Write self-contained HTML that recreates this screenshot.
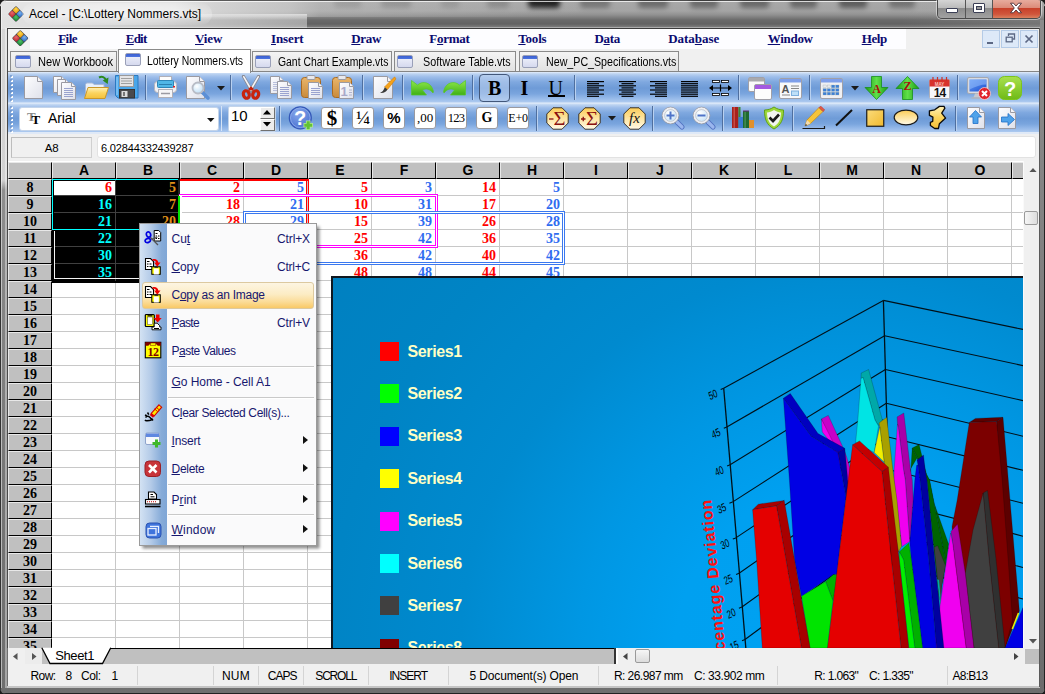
<!DOCTYPE html><html><head><meta charset="utf-8"><title>Accel</title><style>
*{box-sizing:border-box;margin:0;padding:0}
html,body{width:1045px;height:694px;overflow:hidden;background:#1c1c1c}
body{position:relative;font-family:"Liberation Sans",sans-serif;font-size:12px;color:#000}
.abs{position:absolute}
#frame{position:absolute;left:0;top:0;width:1045px;height:694px;border-radius:7px 7px 6px 6px;overflow:hidden;
 background:linear-gradient(#d6d6d6 0,#d2d2d2 180px,#8e8e8e 190px,#858585 300px,#757575 500px,#6e6e6e 694px);}
#titlebar{position:absolute;left:0;top:0;width:1045px;height:29px;overflow:hidden;
 background:linear-gradient(#a8a8a8 0,#a4a4a4 11px,#909090 15px,#6a6a6a 20px,#626262 24px,#7c7c7c 27px,#8a8a8a 29px);}
#title{position:absolute;left:29px;top:7px;font-size:12px;color:#000;white-space:nowrap;letter-spacing:-0.02px}
#client{position:absolute;left:8px;top:29px;width:1031px;height:657px;background:#f0f0f0;overflow:hidden}
.menu{position:absolute;top:0;height:20px;line-height:20px;font-family:"Liberation Serif",serif;font-weight:bold;font-size:13px;color:#0b0b70;white-space:nowrap}
.menu u{text-decoration:underline}
.tab{position:absolute;height:20px;top:22px;border:1px solid #8a8a8a;border-bottom:none;background:linear-gradient(#f4f4f4,#e2e2e2);font-size:11px;white-space:nowrap;line-height:19px}
.tab.act{top:20px;height:23.500px;background:#fff;line-height:20px;z-index:2}
.tab i{position:absolute;left:4px;top:3px;width:16px;height:13px;border:1px solid #9aa0b8;border-radius:2px;background:linear-gradient(#3a5fd0 0,#4d74e0 3px,#e9ecf8 3px,#d5d9ee 100%)}
.tab span{position:absolute;left:28px;top:1px}
.tb{position:absolute;left:0;width:1031px}
.hdr{position:absolute;background:#c0c0c0;border-right:1px solid #000;border-bottom:1px solid #000;border-top:1px solid #e8e8e8;border-left:1px solid #e8e8e8;text-align:center;font-weight:bold}
.ch{top:133px;height:17px;font-size:14px;line-height:15px;font-family:"Liberation Sans",sans-serif}
.rh{left:0;width:44px;height:17px;font-family:"Liberation Serif",serif;font-size:14px;line-height:15px}
.cell{position:absolute;height:17px;line-height:17px;font-family:"Liberation Serif",serif;font-weight:bold;font-size:14px;text-align:right;white-space:nowrap}
.sb{position:absolute;top:637px;height:20px;line-height:20px;font-size:12.5px;white-space:nowrap;color:#000}
.sep{position:absolute;top:640px;width:1px;height:16px;background:#d0d0d0}
</style></head><body>
<div id="frame">
<div id="titlebar"></div>
<svg width="0" height="0" style="position:absolute"><defs>
<radialGradient id="lgo" cx=".35" cy=".35" r=".8"><stop offset="0" stop-color="#ffd848"/><stop offset="1" stop-color="#e89a10"/></radialGradient>
<radialGradient id="lgb" cx=".35" cy=".35" r=".8"><stop offset="0" stop-color="#7ab0ee"/><stop offset="1" stop-color="#2f6cc0"/></radialGradient>
<radialGradient id="lgr" cx=".35" cy=".35" r=".8"><stop offset="0" stop-color="#e8686c"/><stop offset="1" stop-color="#bc2830"/></radialGradient>
<radialGradient id="lgg" cx=".35" cy=".35" r=".8"><stop offset="0" stop-color="#50c068"/><stop offset="1" stop-color="#168530"/></radialGradient>
</defs></svg>
<div class="abs" style="left:334px;top:-5px;width:27px;height:13px;border-radius:4px;background:rgba(20,20,20,0.18);filter:blur(2.500px)"></div>
<div class="abs" style="left:381px;top:-5px;width:30px;height:13px;border-radius:4px;background:rgba(20,20,20,0.22);filter:blur(2.500px)"></div>
<div class="abs" style="left:441px;top:-5px;width:18px;height:13px;border-radius:4px;background:rgba(20,20,20,0.15);filter:blur(2.500px)"></div>
<div class="abs" style="left:487px;top:-5px;width:22px;height:13px;border-radius:4px;background:rgba(20,20,20,0.22);filter:blur(2.500px)"></div>
<div class="abs" style="left:528px;top:-5px;width:32px;height:13px;border-radius:4px;background:rgba(20,20,20,0.95);filter:blur(2.500px)"></div>
<div class="abs" style="left:580px;top:-5px;width:30px;height:13px;border-radius:4px;background:rgba(20,20,20,0.32);filter:blur(2.500px)"></div>
<div class="abs" style="left:638px;top:-5px;width:30px;height:13px;border-radius:4px;background:rgba(20,20,20,0.4);filter:blur(2.500px)"></div>
<div class="abs" style="left:690px;top:-5px;width:28px;height:13px;border-radius:4px;background:rgba(20,20,20,0.4);filter:blur(2.500px)"></div>
<div class="abs" style="left:740px;top:-5px;width:29px;height:13px;border-radius:4px;background:rgba(20,20,20,0.42);filter:blur(2.500px)"></div>
<div class="abs" style="left:790px;top:-5px;width:27px;height:13px;border-radius:4px;background:rgba(20,20,20,0.42);filter:blur(2.500px)"></div>
<div class="abs" style="left:839px;top:-5px;width:28px;height:13px;border-radius:4px;background:rgba(20,20,20,0.5);filter:blur(2.500px)"></div>
<div class="abs" style="left:889px;top:-5px;width:26px;height:13px;border-radius:4px;background:rgba(20,20,20,0.35);filter:blur(2.500px)"></div>
<div class="abs" style="left:0;top:0;width:580px;height:17px;background:linear-gradient(90deg,rgba(228,228,228,1) 0,rgba(228,228,228,1) 175px,rgba(222,222,222,.8) 215px,rgba(215,215,215,.6) 290px,rgba(210,210,210,.3) 320px,rgba(205,205,205,.16) 450px,rgba(200,200,200,0) 580px)"></div>
<div class="abs" style="left:0;top:17px;width:307px;height:12px;background:linear-gradient(90deg,rgba(226,226,226,1) 0,rgba(224,224,224,.95) 60px,rgba(215,215,215,.8) 200px,rgba(205,205,205,.62) 306px)"></div>
<div class="abs" style="left:0;top:14px;width:307px;height:6px;background:linear-gradient(rgba(226,226,226,.9),rgba(226,226,226,0))"></div>
<div class="abs" style="left:900px;top:0;width:145px;height:29px;background:linear-gradient(90deg,rgba(160,160,160,0),rgba(160,160,160,.3))"></div>
<div class="abs" style="left:6px;top:1px;width:1033px;height:1px;background:rgba(255,255,255,.75)"></div>
<div class="abs" style="left:0;top:0;width:1045px;height:1px;background:rgba(40,40,40,.7)"></div>
<svg class="abs" style="left:8px;top:6px" width="16" height="16" viewBox="0 0 16 16">
<g transform="rotate(45 8 8)">
<rect x="2.300" y="2.300" width="11.400" height="11.400" rx="1.200" fill="#4a4a4a"/>
<rect x="2.700" y="2.700" width="5" height="5" rx=".9" fill="url(#lgo)"/>
<rect x="8.300" y="2.700" width="5" height="5" rx=".9" fill="url(#lgb)"/>
<rect x="2.700" y="8.300" width="5" height="5" rx=".9" fill="url(#lgr)"/>
<rect x="8.300" y="8.300" width="5" height="5" rx=".9" fill="url(#lgg)"/>
</g></svg>
<div class="abs" style="left:22px;top:3px;width:190px;height:22px;border-radius:11px;background:radial-gradient(ellipse at center,rgba(255,255,255,.55) 0,rgba(255,255,255,.35) 55%,rgba(255,255,255,0) 100%)"></div>
<div id="title">Accel - [C:\Lottery Nommers.vts]</div>
<div class="abs" style="left:937px;top:-1px;width:104px;height:20px;border:1px solid #4a4a4a;border-top:none;border-radius:0 0 5px 5px;overflow:hidden;box-shadow:0 0 0 1px rgba(255,255,255,.45)">
<div class="abs" style="left:0;top:0;width:28px;height:19px;background:linear-gradient(#d8d8d8 0,#bcbcbc 45%,#8c8c8c 50%,#a2a2a2 100%);border-right:1px solid #555"></div>
<div class="abs" style="left:28px;top:0;width:27px;height:19px;background:linear-gradient(#d8d8d8 0,#bcbcbc 45%,#8c8c8c 50%,#a2a2a2 100%);border-right:1px solid #555"></div>
<div class="abs" style="left:55px;top:0;width:48px;height:19px;background:linear-gradient(#e9b0a2 0,#dc8c7a 45%,#c8412a 50%,#d0563c 80%,#d9805e 100%)"></div>
<div class="abs" style="left:8px;top:9px;width:12px;height:5px;background:#fff;border:1px solid #3b3f55;border-radius:1px"></div>
<div class="abs" style="left:35px;top:4px;width:12px;height:10px;background:#fff;border:1px solid #3b3f55;border-radius:1px"></div>
<div class="abs" style="left:38px;top:7px;width:6px;height:4px;background:#9a9a9a;border:1px solid #3b3f55"></div>
<svg class="abs" style="left:71px;top:3px" width="14" height="12" viewBox="0 0 14 12"><path d="M1.5 1.2h3L7 4l2.5-2.8h3L8.7 6l3.8 4.8h-3L7 8 4.5 10.800h-3L5.300 6z" fill="#fff" stroke="#4a3038" stroke-width=".9" stroke-linejoin="round"/></svg>
</div>
<div class="abs" style="left:0;top:6px;width:1px;height:688px;background:#333"></div>
<div class="abs" style="left:1px;top:6px;width:1px;height:682px;background:rgba(255,255,255,.5)"></div>
<div class="abs" style="left:5px;top:28px;width:2px;height:660px;background:rgba(255,255,255,.38)"></div>
<div class="abs" style="left:7px;top:28px;width:1px;height:620px;background:#4a4a4a"></div>
<div class="abs" style="left:7px;top:28px;width:1033px;height:1px;background:#3c3c3c"></div>
<div class="abs" style="left:7px;top:27px;width:1033px;height:1px;background:rgba(255,255,255,.35)"></div>
<div class="abs" style="left:7px;top:686px;width:1034px;height:1.500px;background:#c4c4c4"></div>
<div class="abs" style="left:1039px;top:28px;width:1px;height:659px;background:#5a5a5a"></div>
<div class="abs" style="left:1040px;top:20px;width:4px;height:672px;background:linear-gradient(#8c8c8c,#6c6c6c)"></div>
<div class="abs" style="left:1044px;top:6px;width:1px;height:688px;background:#222"></div>
<div class="abs" style="left:0;top:692.500px;width:1045px;height:1.500px;background:#222"></div>
<div id="client">
<div class="abs" style="left:22px;top:0;width:876px;height:20px;background:#fdfdff"></div>
<div class="abs" style="left:0;top:0;width:22px;height:20px;background:#f3f3f3"></div>
<svg class="abs" style="left:4px;top:0.5px" width="16.5" height="16.5" viewBox="0 0 16 16">
<g transform="rotate(45 8 8)">
<rect x="2.300" y="2.300" width="11.400" height="11.400" rx="1.200" fill="#4a4a4a"/>
<rect x="2.700" y="2.700" width="5" height="5" rx=".9" fill="url(#lgo)"/>
<rect x="8.300" y="2.700" width="5" height="5" rx=".9" fill="url(#lgb)"/>
<rect x="2.700" y="8.300" width="5" height="5" rx=".9" fill="url(#lgr)"/>
<rect x="8.300" y="8.300" width="5" height="5" rx=".9" fill="url(#lgg)"/>
</g></svg>
<div class="menu" style="left:50.2px;letter-spacing:-0.538px"><u>F</u>ile</div>
<div class="menu" style="left:117.8px;letter-spacing:-0.811px"><u>E</u>dit</div>
<div class="menu" style="left:187.0px;letter-spacing:-0.097px"><u>V</u>iew</div>
<div class="menu" style="left:263.0px;letter-spacing:-0.122px"><u>I</u>nsert</div>
<div class="menu" style="left:343.3px;letter-spacing:-0.341px"><u>D</u>raw</div>
<div class="menu" style="left:421.3px;letter-spacing:-0.282px">F<u>o</u>rmat</div>
<div class="menu" style="left:510.3px;letter-spacing:-0.211px"><u>T</u>ools</div>
<div class="menu" style="left:586.4px;letter-spacing:-0.284px">D<u>a</u>ta</div>
<div class="menu" style="left:660.2px;letter-spacing:-0.025px">Data<u>b</u>ase</div>
<div class="menu" style="left:759.7px;letter-spacing:-0.289px"><u>W</u>indow</div>
<div class="menu" style="left:853.7px;letter-spacing:-0.363px"><u>H</u>elp</div>
<div class="abs" style="left:974px;top:1px;width:18px;height:18px;background:#dde9f8;border:1px solid #b5cbe6"></div>
<div class="abs" style="left:993px;top:1px;width:18px;height:18px;background:#dde9f8;border:1px solid #b5cbe6"></div>
<div class="abs" style="left:1012px;top:1px;width:18px;height:18px;background:#dde9f8;border:1px solid #b5cbe6"></div>
<div class="abs" style="left:979px;top:13px;width:6px;height:2px;background:#5c6884"></div>
<svg class="abs" style="left:997px;top:4px" width="11" height="11" viewBox="0 0 11 11"><path d="M3.500 3V1h6v5h-2" fill="none" stroke="#5c6884" stroke-width="1.3"/><rect x="1.2" y="4.200" width="6" height="4.600" fill="none" stroke="#5c6884" stroke-width="1.300"/></svg>
<svg class="abs" style="left:1016px;top:5px" width="10" height="10" viewBox="0 0 10 10"><path d="M1.500 1.500l7 7M8.500 1.500l-7 7" stroke="#5c6884" stroke-width="1.700"/></svg>
<div class="abs" style="left:0;top:41.500px;width:1031px;height:1.500px;background:#858585"></div>
<div class="tab" style="left:2px;width:107px"><i style="left:4px"></i><span style="left:27.0px;font-size:12px;display:inline-block;transform:scaleX(0.9243);transform-origin:0 0">New Workbook</span></div>
<div class="tab act" style="left:110px;width:133px"><i style="left:6px"></i><span style="left:28.0px;font-size:12px;display:inline-block;transform:scaleX(0.8672);transform-origin:0 0">Lottery Nommers.vts</span></div>
<div class="tab" style="left:244px;width:140px"><i style="left:2px"></i><span style="left:24.6px;font-size:12px;display:inline-block;transform:scaleX(0.8666);transform-origin:0 0">Gant Chart Example.vts</span></div>
<div class="tab" style="left:386px;width:122px"><i style="left:2px"></i><span style="left:28.0px;font-size:12px;display:inline-block;transform:scaleX(0.8965);transform-origin:0 0">Software Table.vts</span></div>
<div class="tab" style="left:511px;width:160px"><i style="left:2px"></i><span style="left:25.6px;font-size:12px;display:inline-block;transform:scaleX(0.8887);transform-origin:0 0">New_PC_Specifications.vts</span></div>
<div class="tb" style="top:43px;height:31px;background:linear-gradient(#e4eefb 0,#bcd3f1 6%,#9dbdea 16%,#7fa8df 32%,#6e9bd7 52%,#7aa5de 70%,#98bbea 86%,#b3cef1 100%)"></div>
<div class="tb" style="top:74px;height:30px;background:linear-gradient(#e4eefb 0,#bcd3f1 6%,#9dbdea 16%,#7fa8df 32%,#6e9bd7 52%,#7aa5de 70%,#98bbea 86%,#b3cef1 100%)"></div>
<div class="tb" style="top:73px;height:1px;background:#c9dcf5"></div>
<div class="tb" style="top:103px;height:2px;background:#dfe9f7"></div>
<svg class="abs" style="left:2px;top:46px" width="4" height="28" viewBox="0 0 4 28"><rect x="1" y="1" width="2" height="2" fill="#fff"/><rect x="0" y="0" width="2" height="2" fill="#5f86c0" opacity=".55"/><rect x="1" y="5" width="2" height="2" fill="#fff"/><rect x="0" y="4" width="2" height="2" fill="#5f86c0" opacity=".55"/><rect x="1" y="9" width="2" height="2" fill="#fff"/><rect x="0" y="8" width="2" height="2" fill="#5f86c0" opacity=".55"/><rect x="1" y="13" width="2" height="2" fill="#fff"/><rect x="0" y="12" width="2" height="2" fill="#5f86c0" opacity=".55"/><rect x="1" y="17" width="2" height="2" fill="#fff"/><rect x="0" y="16" width="2" height="2" fill="#5f86c0" opacity=".55"/><rect x="1" y="21" width="2" height="2" fill="#fff"/><rect x="0" y="20" width="2" height="2" fill="#5f86c0" opacity=".55"/><rect x="1" y="25" width="2" height="2" fill="#fff"/><rect x="0" y="24" width="2" height="2" fill="#5f86c0" opacity=".55"/></svg>
<svg class="abs" style="left:2px;top:77px" width="4" height="28" viewBox="0 0 4 28"><rect x="1" y="1" width="2" height="2" fill="#fff"/><rect x="0" y="0" width="2" height="2" fill="#5f86c0" opacity=".55"/><rect x="1" y="5" width="2" height="2" fill="#fff"/><rect x="0" y="4" width="2" height="2" fill="#5f86c0" opacity=".55"/><rect x="1" y="9" width="2" height="2" fill="#fff"/><rect x="0" y="8" width="2" height="2" fill="#5f86c0" opacity=".55"/><rect x="1" y="13" width="2" height="2" fill="#fff"/><rect x="0" y="12" width="2" height="2" fill="#5f86c0" opacity=".55"/><rect x="1" y="17" width="2" height="2" fill="#fff"/><rect x="0" y="16" width="2" height="2" fill="#5f86c0" opacity=".55"/><rect x="1" y="21" width="2" height="2" fill="#fff"/><rect x="0" y="20" width="2" height="2" fill="#5f86c0" opacity=".55"/><rect x="1" y="25" width="2" height="2" fill="#fff"/><rect x="0" y="24" width="2" height="2" fill="#5f86c0" opacity=".55"/></svg>
<div class="abs" style="left:137px;top:46px;width:1px;height:25px;background:#4f6f9f"></div><div class="abs" style="left:138px;top:46px;width:1px;height:25px;background:#b9d1f0"></div>
<div class="abs" style="left:222px;top:46px;width:1px;height:25px;background:#4f6f9f"></div><div class="abs" style="left:223px;top:46px;width:1px;height:25px;background:#b9d1f0"></div>
<div class="abs" style="left:354px;top:46px;width:1px;height:25px;background:#4f6f9f"></div><div class="abs" style="left:355px;top:46px;width:1px;height:25px;background:#b9d1f0"></div>
<div class="abs" style="left:394px;top:46px;width:1px;height:25px;background:#4f6f9f"></div><div class="abs" style="left:395px;top:46px;width:1px;height:25px;background:#b9d1f0"></div>
<div class="abs" style="left:464px;top:46px;width:1px;height:25px;background:#4f6f9f"></div><div class="abs" style="left:465px;top:46px;width:1px;height:25px;background:#b9d1f0"></div>
<div class="abs" style="left:566px;top:46px;width:1px;height:25px;background:#4f6f9f"></div><div class="abs" style="left:567px;top:46px;width:1px;height:25px;background:#b9d1f0"></div>
<div class="abs" style="left:730px;top:46px;width:1px;height:25px;background:#4f6f9f"></div><div class="abs" style="left:731px;top:46px;width:1px;height:25px;background:#b9d1f0"></div>
<div class="abs" style="left:801px;top:46px;width:1px;height:25px;background:#4f6f9f"></div><div class="abs" style="left:802px;top:46px;width:1px;height:25px;background:#b9d1f0"></div>
<div class="abs" style="left:949px;top:46px;width:1px;height:25px;background:#4f6f9f"></div><div class="abs" style="left:950px;top:46px;width:1px;height:25px;background:#b9d1f0"></div>
<div class="abs" style="left:271px;top:77px;width:1px;height:25px;background:#4f6f9f"></div><div class="abs" style="left:272px;top:77px;width:1px;height:25px;background:#b9d1f0"></div>
<div class="abs" style="left:528px;top:77px;width:1px;height:25px;background:#4f6f9f"></div><div class="abs" style="left:529px;top:77px;width:1px;height:25px;background:#b9d1f0"></div>
<div class="abs" style="left:644px;top:77px;width:1px;height:25px;background:#4f6f9f"></div><div class="abs" style="left:645px;top:77px;width:1px;height:25px;background:#b9d1f0"></div>
<div class="abs" style="left:714px;top:77px;width:1px;height:25px;background:#4f6f9f"></div><div class="abs" style="left:715px;top:77px;width:1px;height:25px;background:#b9d1f0"></div>
<div class="abs" style="left:784px;top:77px;width:1px;height:25px;background:#4f6f9f"></div><div class="abs" style="left:785px;top:77px;width:1px;height:25px;background:#b9d1f0"></div>
<div class="abs" style="left:947px;top:77px;width:1px;height:25px;background:#4f6f9f"></div><div class="abs" style="left:948px;top:77px;width:1px;height:25px;background:#b9d1f0"></div>
<svg width="0" height="0" style="position:absolute"><defs><linearGradient id="pg" x1="0" y1="0" x2="1" y2="1"><stop offset="0" stop-color="#fdfdff"/><stop offset="1" stop-color="#dfe1ea"/></linearGradient><linearGradient id="fold" x1="0" y1="0" x2="0" y2="1"><stop offset="0" stop-color="#fff1b8"/><stop offset=".5" stop-color="#fbd45e"/><stop offset="1" stop-color="#f4c13a"/></linearGradient><linearGradient id="clip" x1="0" y1="0" x2="0" y2="1"><stop offset="0" stop-color="#e9b56a"/><stop offset="1" stop-color="#c98a3a"/></linearGradient><linearGradient id="grn" x1="0" y1="0" x2="0" y2="1"><stop offset="0" stop-color="#8fe84a"/><stop offset="1" stop-color="#3fb016"/></linearGradient><linearGradient id="grn2" x1="0" y1="0" x2="1" y2="0"><stop offset="0" stop-color="#1e9a12"/><stop offset=".5" stop-color="#5fe04a"/><stop offset="1" stop-color="#1e9a12"/></linearGradient><linearGradient id="oct" x1="0" y1="0" x2="0" y2="1"><stop offset="0" stop-color="#fbcc58"/><stop offset=".45" stop-color="#fde29a"/><stop offset="1" stop-color="#fffae8"/></linearGradient><radialGradient id="hb" cx=".4" cy=".3" r=".9"><stop offset="0" stop-color="#86a8ea"/><stop offset="1" stop-color="#3c64cc"/></radialGradient><radialGradient id="lens" cx=".4" cy=".35" r=".7"><stop offset="0" stop-color="#ffffff"/><stop offset="1" stop-color="#b9dcf6"/></radialGradient><linearGradient id="mon" x1="0" y1="0" x2="1" y2="1"><stop offset="0" stop-color="#6aa0f5"/><stop offset="1" stop-color="#1b4fd0"/></linearGradient><linearGradient id="hg" x1="0" y1="0" x2="0" y2="1"><stop offset="0" stop-color="#a8e04e"/><stop offset="1" stop-color="#6fba16"/></linearGradient><linearGradient id="sq" x1="0" y1="0" x2="1" y2="1"><stop offset="0" stop-color="#fbdc7c"/><stop offset="1" stop-color="#f0b92e"/></linearGradient></defs></svg>
<svg class="abs" style="left:15px;top:46px" width="22" height="26" viewBox="0 0 22 26"><path d="M1.5 1.5h13l5 5v17h-18z" fill="url(#pg)" stroke="#9a9aa2" stroke-width="1"/><path d="M14.5 1.5v5h5" fill="#f4f4f8" stroke="#9a9aa2" stroke-width="1"/></svg>
<svg class="abs" style="left:44px;top:46px" width="26" height="26" viewBox="0 0 26 26"><path d="M1.5 1.5h8l4 4v12h-12z" fill="url(#pg)" stroke="#9a9aa2" stroke-width="1"/><path d="M9.5 1.5v4h4" fill="#f4f4f8" stroke="#9a9aa2" stroke-width="1"/><path d="M5.5 4.5h8l4 4v12h-12z" fill="url(#pg)" stroke="#9a9aa2" stroke-width="1"/><path d="M13.5 4.5v4h4" fill="#f4f4f8" stroke="#9a9aa2" stroke-width="1"/><path d="M9.5 7.5h10l4 4v13h-14z" fill="url(#pg)" stroke="#9a9aa2" stroke-width="1"/><path d="M19.5 7.5v4h4" fill="#f4f4f8" stroke="#9a9aa2" stroke-width="1"/><path d="M12.0 13.5h9" stroke="#9aa3cf" stroke-width="1"/><path d="M12.0 15.5h9" stroke="#9aa3cf" stroke-width="1"/><path d="M12.0 17.5h9" stroke="#9aa3cf" stroke-width="1"/><path d="M12.0 19.5h9" stroke="#9aa3cf" stroke-width="1"/><path d="M12.0 21.5h9" stroke="#9aa3cf" stroke-width="1"/></svg>
<svg class="abs" style="left:75px;top:46px" width="27" height="26" viewBox="0 0 27 26"><path d="M16 2.500c3-1.500 6-.5 7 3" fill="none" stroke="#2b8a1e" stroke-width="2"/><path d="M25.500 2.500l-.8 6.500-5-3.500z" fill="#2b8a1e"/><path d="M2.500 22.500v-13l1-1.500h6l1.500 1.500h10v13z" fill="#e8f0fb" stroke="#a9b9d6"/><path d="M1.500 23.500l3.500-11h20.500l-3.500 11z" fill="url(#fold)" stroke="#c9972a"/></svg>
<svg class="abs" style="left:106px;top:45px" width="26" height="27" viewBox="0 0 26 27"><path d="M1.500 1.500h22.500v22.500h-20l-2.500-2.500z" fill="#4aa6ea" stroke="#2b78c0"/><path d="M3 3v18" stroke="#9fd3fa" stroke-width="1"/><rect x="5.500" y="1.500" width="14" height="11" fill="#e4e4e6" stroke="#9a9a9a"/><path d="M7 4.500h11M7 7h11M7 9.500h11" stroke="#a0a0a0"/><rect x="5.500" y="15.500" width="15" height="8.500" fill="#4a4a4c" stroke="#333"/><rect x="7.500" y="17" width="6" height="6" fill="#dcdcdc"/><rect x="9" y="18" width="2" height="4" fill="#777"/></svg>
<svg class="abs" style="left:145px;top:46px" width="26" height="25" viewBox="0 0 26 25"><rect x="6.500" y="1.500" width="12" height="6" fill="#fdfdfd" stroke="#b0b0b8"/><rect x="1.500" y="6.500" width="22" height="11" rx="3" fill="#f0f0f4" stroke="#b4b4bc"/><rect x="4.500" y="5.500" width="16" height="7" rx="1" fill="#4fb6e6" stroke="#2f86b8"/><path d="M6 9.500h13" stroke="#2a7fb0"/><rect x="5.500" y="14.500" width="14" height="8" fill="#f6f6f8" stroke="#b0b0b8"/><path d="M8 18.500h9" stroke="#9a9aa2" stroke-width="1.500"/><rect x="20" y="11" width="2" height="1.500" fill="#e02020"/></svg>
<svg class="abs" style="left:177px;top:46px" width="27" height="26" viewBox="0 0 27 26"><path d="M1.5 1.5h13l5 5v17h-18z" fill="url(#pg)" stroke="#9a9aa2" stroke-width="1"/><path d="M14.5 1.5v5h5" fill="#f4f4f8" stroke="#9a9aa2" stroke-width="1"/><path d="M17 17l6 6" stroke="#5b8fd6" stroke-width="3.500" stroke-linecap="round"/><circle cx="13" cy="13" r="5.500" fill="url(#lens)" stroke="#b8bcc6" stroke-width="1.800"/></svg>
<svg class="abs" style="left:209px;top:57px" width="8" height="5" viewBox="0 0 8 5"><path d="M0 0h8l-4 4.500z" fill="#1a1a1a"/></svg>
<svg class="abs" style="left:232px;top:46px" width="22" height="26" viewBox="0 0 22 26"><path d="M3.500 1.500l8 14M18.500 1.500l-8 14" stroke="#8a8a92" stroke-width="3.200" stroke-linecap="round"/><path d="M3.800 1.800l7.600 13.200M18.200 1.800l-7.600 13.200" stroke="#f4f4f8" stroke-width="1.600" stroke-linecap="round"/><ellipse cx="6.300" cy="19.500" rx="2.900" ry="3.800" fill="none" stroke="#c8230e" stroke-width="3.200" transform="rotate(-15 6.300 19.500)"/><ellipse cx="15.700" cy="19.500" rx="2.900" ry="3.800" fill="none" stroke="#c8230e" stroke-width="3.200" transform="rotate(15 15.700 19.500)"/><path d="M9 15l2 -2 2 2" stroke="#c8230e" stroke-width="2.500" fill="none"/></svg>
<svg class="abs" style="left:261px;top:46px" width="26" height="26" viewBox="0 0 26 26"><path d="M1.5 1.5h9l4 4v13h-13z" fill="url(#pg)" stroke="#9a9aa2" stroke-width="1"/><path d="M10.5 1.5v4h4" fill="#f4f4f8" stroke="#9a9aa2" stroke-width="1"/><path d="M4.0 7.5h8" stroke="#b9bfdc" stroke-width="1"/><path d="M4.0 9.5h8" stroke="#b9bfdc" stroke-width="1"/><path d="M4.0 11.5h8" stroke="#b9bfdc" stroke-width="1"/><path d="M4.0 13.5h8" stroke="#b9bfdc" stroke-width="1"/><path d="M4.0 15.5h8" stroke="#b9bfdc" stroke-width="1"/><path d="M8.5 6.5h10l4 4v13h-14z" fill="url(#pg)" stroke="#9a9aa2" stroke-width="1"/><path d="M18.5 6.5v4h4" fill="#f4f4f8" stroke="#9a9aa2" stroke-width="1"/><path d="M11.0 12.5h9" stroke="#9aa3cf" stroke-width="1"/><path d="M11.0 14.5h9" stroke="#9aa3cf" stroke-width="1"/><path d="M11.0 16.5h9" stroke="#9aa3cf" stroke-width="1"/><path d="M11.0 18.5h9" stroke="#9aa3cf" stroke-width="1"/><path d="M11.0 20.5h9" stroke="#9aa3cf" stroke-width="1"/></svg>
<svg class="abs" style="left:292px;top:46px" width="26" height="26" viewBox="0 0 26 26"><rect x="1.500" y="2.500" width="19" height="20" rx="3" fill="url(#clip)" stroke="#a86a22"/><rect x="7" y=".5" width="8" height="4" rx="1" fill="#e8e8ec" stroke="#9a9aa2"/><path d="M8.5 7.5h10l4 4v12h-14z" fill="url(#pg)" stroke="#9a9aa2" stroke-width="1"/><path d="M18.5 7.5v4h4" fill="#f4f4f8" stroke="#9a9aa2" stroke-width="1"/><path d="M11.0 13.5h9" stroke="#9aa3cf" stroke-width="1"/><path d="M11.0 15.5h9" stroke="#9aa3cf" stroke-width="1"/><path d="M11.0 17.5h9" stroke="#9aa3cf" stroke-width="1"/><path d="M11.0 19.5h9" stroke="#9aa3cf" stroke-width="1"/></svg>
<svg class="abs" style="left:323px;top:46px" width="26" height="26" viewBox="0 0 26 26"><rect x="1.500" y="2.500" width="19" height="20" rx="3" fill="url(#clip)" stroke="#a86a22"/><rect x="7" y=".5" width="8" height="4" rx="1" fill="#e8e8ec" stroke="#9a9aa2"/><path d="M8.5 7.5h10l4 4v12h-14z" fill="url(#pg)" stroke="#9a9aa2" stroke-width="1"/><path d="M18.5 7.5v4h4" fill="#f4f4f8" stroke="#9a9aa2" stroke-width="1"/><text x="9.500" y="21" font-family="Liberation Sans" font-weight="bold" font-size="13" fill="#a9a9c9">1</text><path d="M18 15h3M18 17.500h3M18 20h3" stroke="#b0b4d0"/></svg>
<svg class="abs" style="left:364px;top:46px" width="26" height="26" viewBox="0 0 26 26"><path d="M1.5 1.5h14l5 5v17h-19z" fill="url(#pg)" stroke="#9a9aa2" stroke-width="1"/><path d="M15.5 1.5v5h5" fill="#f4f4f8" stroke="#9a9aa2" stroke-width="1"/><path d="M22.500 2c1 .5 1.500 1.500 1 2.500l-8 10-3-2.500z" fill="#f5a21a" stroke="#d07a08" stroke-width=".6"/><path d="M12.800 12.300l2.600 2.200c-1.200 2.400-3.800 3.800-7.400 3.400 2.400-.8 3.600-2.600 4.800-5.600z" fill="#3a3a3a"/></svg>
<svg class="abs" style="left:403px;top:51px" width="24" height="16" viewBox="0 0 24 16"><path d="M.5 .5l6 4.500c5-4.500 14-3 16 6.500l-.5 1.500c-3-4-7-5-10.500-3l4 5h-15z" fill="url(#grn)" stroke="#58c828" stroke-width=".7"/></svg>
<svg class="abs" style="left:434px;top:51px" width="24" height="16" viewBox="0 0 24 16"><g transform="translate(24 0) scale(-1 1)"><path d="M.5 .5l6 4.500c5-4.500 14-3 16 6.500l-.5 1.500c-3-4-7-5-10.500-3l4 5h-15z" fill="url(#grn)" stroke="#58c828" stroke-width=".7"/></g></svg>
<div class="abs" style="left:471px;top:45px;width:31px;height:28px;border:1px solid #42577a;border-radius:4px;background:rgba(190,210,238,.55)"></div>
<div class="abs" style="left:480px;top:47px;font:bold 20px 'Liberation Serif',serif;line-height:24px">B</div>
<div class="abs" style="left:512.500px;top:47px;font:bold 20px 'Liberation Serif',serif;line-height:24px">I</div>
<div class="abs" style="left:540.500px;top:47px;font:20px 'Liberation Serif',serif;line-height:24px">U</div>
<div class="abs" style="left:540px;top:66px;width:17px;height:1.500px;background:#000"></div>
<svg class="abs" style="left:579px;top:51px" width="17" height="18" viewBox="0 0 17 18"><rect x="0" y="1.0" width="17" height="1.200" fill="#000"/><rect x="0" y="3.1" width="12" height="1.200" fill="#000"/><rect x="0" y="5.2" width="17" height="1.200" fill="#000"/><rect x="0" y="7.3" width="12" height="1.200" fill="#000"/><rect x="0" y="9.4" width="17" height="1.200" fill="#000"/><rect x="0" y="11.5" width="12" height="1.200" fill="#000"/><rect x="0" y="13.6" width="17" height="1.200" fill="#000"/><rect x="0" y="15.7" width="12" height="1.200" fill="#000"/></svg>
<svg class="abs" style="left:611px;top:51px" width="17" height="18" viewBox="0 0 17 18"><rect x="0.0" y="1.0" width="17" height="1.200" fill="#000"/><rect x="2.5" y="3.1" width="12" height="1.200" fill="#000"/><rect x="0.0" y="5.2" width="17" height="1.200" fill="#000"/><rect x="2.5" y="7.3" width="12" height="1.200" fill="#000"/><rect x="0.0" y="9.4" width="17" height="1.200" fill="#000"/><rect x="2.5" y="11.5" width="12" height="1.200" fill="#000"/><rect x="0.0" y="13.6" width="17" height="1.200" fill="#000"/><rect x="2.5" y="15.7" width="12" height="1.200" fill="#000"/></svg>
<svg class="abs" style="left:642px;top:51px" width="17" height="18" viewBox="0 0 17 18"><rect x="0" y="1.0" width="17" height="1.200" fill="#000"/><rect x="5" y="3.1" width="12" height="1.200" fill="#000"/><rect x="0" y="5.2" width="17" height="1.200" fill="#000"/><rect x="5" y="7.3" width="12" height="1.200" fill="#000"/><rect x="0" y="9.4" width="17" height="1.200" fill="#000"/><rect x="5" y="11.5" width="12" height="1.200" fill="#000"/><rect x="0" y="13.6" width="17" height="1.200" fill="#000"/><rect x="5" y="15.7" width="12" height="1.200" fill="#000"/></svg>
<svg class="abs" style="left:673px;top:51px" width="17" height="18" viewBox="0 0 17 18"><rect x="0" y="1.0" width="17" height="1.200" fill="#000"/><rect x="0" y="3.1" width="17" height="1.200" fill="#000"/><rect x="0" y="5.2" width="17" height="1.200" fill="#000"/><rect x="0" y="7.3" width="17" height="1.200" fill="#000"/><rect x="0" y="9.4" width="17" height="1.200" fill="#000"/><rect x="0" y="11.5" width="17" height="1.200" fill="#000"/><rect x="0" y="13.6" width="17" height="1.200" fill="#000"/><rect x="0" y="15.7" width="17" height="1.200" fill="#000"/></svg>
<svg class="abs" style="left:701px;top:51px" width="23" height="17" viewBox="0 0 23 17"><rect x="3.500" y=".5" width="7" height="2" fill="#fff" stroke="#000" stroke-width=".8"/><rect x="12.500" y=".5" width="7" height="2" fill="#fff" stroke="#000" stroke-width=".8"/><rect x="3.500" y="13.500" width="7" height="2" fill="#fff" stroke="#000" stroke-width=".8"/><rect x="12.500" y="13.500" width="7" height="2" fill="#fff" stroke="#000" stroke-width=".8"/><path d="M2 8h19M11.500 4.500v7" stroke="#000" stroke-width="1.200"/><path d="M0 8l4-3v6zM23 8l-4-3v6z" fill="#000"/></svg>
<svg class="abs" style="left:739px;top:47px" width="26" height="25" viewBox="0 0 26 25"><rect x="1.500" y="1.500" width="16" height="14" rx="1.500" fill="#fafafa" stroke="#a0a0a8"/><rect x="2" y="2" width="15" height="3.500" fill="#a9a9ad"/><rect x="7.500" y="8.500" width="17" height="15" rx="1.500" fill="#fdfdfd" stroke="#a0a0a8"/><rect x="8" y="9" width="16" height="4" fill="#a45ae0"/></svg>
<svg class="abs" style="left:771px;top:48px" width="24" height="23" viewBox="0 0 24 23"><rect x=".5" y="1.500" width="22" height="20" rx="1.500" fill="#f8f8fa" stroke="#a0a0a8"/><rect x="1" y="2" width="21" height="3.500" fill="#7f9fea"/><text x="2.500" y="15.500" font-family="Liberation Sans" font-weight="bold" font-size="11" fill="#555">A</text><path d="M3 18h8M12 9h8M12 11.500h8" stroke="#888"/><rect x="12.500" y="14" width="7" height="4.500" fill="#bfe0f8" stroke="#7fb0de"/></svg>
<svg class="abs" style="left:812px;top:48px" width="24" height="23" viewBox="0 0 24 23"><rect x=".5" y="1.500" width="22" height="20" rx="1.500" fill="#f0f0f3" stroke="#a0a0a8"/><rect x="1" y="2" width="21" height="3.500" fill="#7f9fea"/><g><rect x="3.0" y="8.0" width="3.400" height="2.800" fill="#e9e9ee" stroke="#9aa" stroke-width=".3"/><rect x="7.2" y="8.0" width="3.400" height="2.800" fill="#e9e9ee" stroke="#9aa" stroke-width=".3"/><rect x="11.4" y="8.0" width="3.400" height="2.800" fill="#3b7fd8" stroke="#9aa" stroke-width=".3"/><rect x="15.6" y="8.0" width="3.400" height="2.800" fill="#3b7fd8" stroke="#9aa" stroke-width=".3"/><rect x="3.0" y="11.6" width="3.400" height="2.800" fill="#3b7fd8" stroke="#9aa" stroke-width=".3"/><rect x="7.2" y="11.6" width="3.400" height="2.800" fill="#3b7fd8" stroke="#9aa" stroke-width=".3"/><rect x="11.4" y="11.6" width="3.400" height="2.800" fill="#3b7fd8" stroke="#9aa" stroke-width=".3"/><rect x="15.6" y="11.6" width="3.400" height="2.800" fill="#3b7fd8" stroke="#9aa" stroke-width=".3"/><rect x="3.0" y="15.2" width="3.400" height="2.800" fill="#3b7fd8" stroke="#9aa" stroke-width=".3"/><rect x="7.2" y="15.2" width="3.400" height="2.800" fill="#3b7fd8" stroke="#9aa" stroke-width=".3"/><rect x="11.4" y="15.2" width="3.400" height="2.800" fill="#3b7fd8" stroke="#9aa" stroke-width=".3"/><rect x="15.6" y="15.2" width="3.400" height="2.800" fill="#3b7fd8" stroke="#9aa" stroke-width=".3"/></g></svg>
<svg class="abs" style="left:843px;top:57px" width="8" height="5" viewBox="0 0 8 5"><path d="M0 0h8l-4 4.500z" fill="#1a1a1a"/></svg>
<svg class="abs" style="left:856px;top:47px" width="25" height="24" viewBox="0 0 25 24"><path d="M7.500 .5h10v11h6.500l-11.500 12-11.500-12h6.500z" fill="url(#grn2)" stroke="#18901a" stroke-width=".8"/><text x="12.500" y="17" text-anchor="middle" font-family="Liberation Serif" font-weight="bold" font-size="12" fill="#a8100e">A</text></svg>
<svg class="abs" style="left:887px;top:47px" width="25" height="24" viewBox="0 0 25 24"><path d="M7.500 23.500h10v-11h6.500l-11.500-12-11.500 12h6.500z" fill="url(#grn2)" stroke="#18901a" stroke-width=".8"/><text x="12.500" y="14" text-anchor="middle" font-family="Liberation Serif" font-weight="bold" font-size="12" fill="#a8100e">Z</text></svg>
<svg class="abs" style="left:920px;top:47px" width="23" height="24" viewBox="0 0 23 24"><rect x="1.500" y="3.500" width="20" height="19" rx="1" fill="#f7f7fa" stroke="#b0b0b8"/><path d="M1.500 4.500a1 1 0 0 1 1-1h18a1 1 0 0 1 1 1v6h-20z" fill="#d8322c"/><text x="11.500" y="9.500" text-anchor="middle" font-family="Liberation Sans" font-weight="bold" font-size="4.500" fill="#f7c0b8">MAY</text><text x="11.500" y="21" text-anchor="middle" font-family="Liberation Sans" font-weight="bold" font-size="12" fill="#111" letter-spacing="-.8">14</text><path d="M5 1v4M9.500 1v4M14 1v4M18.500 1v4" stroke="#c8322c" stroke-width="1.200"/></svg>
<svg class="abs" style="left:958px;top:47px" width="27" height="25" viewBox="0 0 27 25"><rect x="1.500" y="1.500" width="21" height="16" rx="1.500" fill="#d8dbe2" stroke="#a4a8b2"/><rect x="3.500" y="3.500" width="17" height="12" fill="url(#mon)"/><path d="M3.500 3.500h17v5c-6 0-11 2-17 5z" fill="#8db8fa" opacity=".6"/><path d="M9 17.500h6l1.500 4h-9z" fill="#c4c8d0"/><path d="M5.500 22h13" stroke="#b0b4bc" stroke-width="1.500"/><circle cx="18.500" cy="17.500" r="6" fill="#e0242c" stroke="#f8d0d0" stroke-width=".8"/><path d="M16 15l5 5M21 15l-5 5" stroke="#fff" stroke-width="2"/></svg>
<svg class="abs" style="left:989px;top:46px" width="26" height="26" viewBox="0 0 26 26"><rect x="1.500" y="1.500" width="23" height="23" rx="6" fill="url(#hg)" stroke="#7cc41c"/><text x="13" y="20.500" text-anchor="middle" font-family="Liberation Sans" font-weight="bold" font-size="20" fill="#fff">?</text></svg>
<div class="abs" style="left:11px;top:77.500px;width:200px;height:24px;background:#fff;border:1px solid #c3d4ea;border-radius:3px"></div>
<div class="abs" style="left:19px;top:78.500px;font:bold 13px 'Liberation Serif',serif;color:#8a8a8a;line-height:18px">T</div>
<div class="abs" style="left:23.500px;top:81.700px;font:bold 13px 'Liberation Serif',serif;color:#000;line-height:18px">T</div>
<div class="abs" style="left:40px;top:80px;font:14px 'Liberation Sans',sans-serif;line-height:18px;letter-spacing:-.1px">Arial</div>
<svg class="abs" style="left:199px;top:89px" width="8" height="4" viewBox="0 0 8 4"><path d="M0 0h7.500l-3.750 4z" fill="#111"/></svg>
<div class="abs" style="left:213px;top:77px;width:1px;height:25px;background:#d6e4f6"></div>
<div class="abs" style="left:220px;top:77px;width:48px;height:26px;background:#fff;border:1px solid #c3d4ea;border-radius:2px"></div>
<div class="abs" style="left:223px;top:78px;font:15px 'Liberation Sans',sans-serif;line-height:18px">10</div>
<div class="abs" style="left:252px;top:78px;width:15px;height:11.500px;background:#ececec;border:1px solid #fff;border-right-color:#707070;border-bottom-color:#707070"></div>
<div class="abs" style="left:252px;top:89.500px;width:15px;height:12px;background:#ececec;border:1px solid #fff;border-right-color:#707070;border-bottom-color:#707070"></div>
<svg class="abs" style="left:255px;top:81px" width="8" height="5" viewBox="0 0 8 5"><path d="M0 4.500h8l-4-4.500z" fill="#000"/></svg>
<svg class="abs" style="left:255px;top:93px" width="8" height="5" viewBox="0 0 8 5"><path d="M0 0h8l-4 4.500z" fill="#000"/></svg>
<svg class="abs" style="left:280px;top:76px" width="26" height="26" viewBox="0 0 26 26"><circle cx="12.300" cy="12.800" r="11" fill="url(#hb)" stroke="#3458b8" stroke-width="1.200"/><circle cx="12.300" cy="12.800" r="9.800" fill="none" stroke="#9ab4ec" stroke-width=".7"/><text x="12" y="20" text-anchor="middle" font-family="Liberation Sans" font-weight="bold" font-size="20" fill="#fff">?</text><path d="M20.200 15.500v9.500M15.500 20.200h9.500" stroke="#b4e89a" stroke-width="4.600"/><path d="M20.200 16.300v7.900M16.300 20.200h7.900" stroke="#62c234" stroke-width="3"/></svg>
<div class="abs" style="left:313px;top:78px;width:22px;height:22px;background:#fff;border:1px solid #9a9aa0;border-radius:3px"></div><div class="abs" style="left:313px;top:78px;width:22px;height:22px;line-height:22px;text-align:center;white-space:nowrap;font-family:'Liberation Serif',serif;font-size:21px;font-weight:bold">$</div>
<div class="abs" style="left:344px;top:78px;width:22px;height:22px;background:#fff;border:1px solid #9a9aa0;border-radius:3px"></div><div class="abs" style="left:344px;top:78px;width:22px;height:22px;line-height:22px;text-align:center;white-space:nowrap;font-family:'Liberation Serif',serif;font-size:19px">&#188;</div>
<div class="abs" style="left:375px;top:78px;width:22px;height:22px;background:#fff;border:1px solid #9a9aa0;border-radius:3px"></div><div class="abs" style="left:375px;top:78px;width:22px;height:22px;line-height:22px;text-align:center;white-space:nowrap;font-family:'Liberation Sans',sans-serif;font-size:15px;font-weight:bold">%</div>
<div class="abs" style="left:406px;top:78px;width:22px;height:22px;background:#fff;border:1px solid #9a9aa0;border-radius:3px"></div><div class="abs" style="left:406px;top:78px;width:22px;height:22px;line-height:22px;text-align:center;white-space:nowrap;font-family:'Liberation Serif',serif;font-size:13px">,00</div>
<div class="abs" style="left:437px;top:78px;width:22px;height:22px;background:#fff;border:1px solid #9a9aa0;border-radius:3px"></div><div class="abs" style="left:437px;top:78px;width:22px;height:22px;line-height:22px;text-align:center;white-space:nowrap;font-family:'Liberation Serif',serif;font-size:12.500px;letter-spacing:-.7px">123</div>
<div class="abs" style="left:468px;top:78px;width:22px;height:22px;background:#fff;border:1px solid #9a9aa0;border-radius:3px"></div><div class="abs" style="left:468px;top:78px;width:22px;height:22px;line-height:22px;text-align:center;white-space:nowrap;font-family:'Liberation Serif',serif;font-size:14px;font-weight:bold">G</div>
<div class="abs" style="left:499px;top:78px;width:22px;height:22px;background:#fff;border:1px solid #9a9aa0;border-radius:3px"></div><div class="abs" style="left:499px;top:78px;width:22px;height:22px;line-height:22px;text-align:center;white-space:nowrap;font-family:'Liberation Serif',serif;font-size:12px;letter-spacing:-.2px">E+0</div>
<svg class="abs" style="left:537.5px;top:77.5px" width="23" height="23" viewBox="0 0 23 23"><path d="M7 .8h9l6.200 6.200v9l-6.200 6.200h-9l-6.200-6.200v-9z" fill="url(#oct)" stroke="#2c2418" stroke-width=".9"/><text x="13.500" y="18" text-anchor="middle" font-family="Liberation Serif" font-size="19" fill="#8a1010" textLength="12" lengthAdjust="spacingAndGlyphs">&#931;</text><path d="M3 12h4.500" stroke="#8a1010" stroke-width="1.300"/></svg>
<svg class="abs" style="left:569.5px;top:77.5px" width="23" height="23" viewBox="0 0 23 23"><path d="M7 .8h9l6.200 6.200v9l-6.200 6.200h-9l-6.200-6.200v-9z" fill="url(#oct)" stroke="#2c2418" stroke-width=".9"/><text x="14" y="18" text-anchor="middle" font-family="Liberation Serif" font-size="19" fill="#8a1010" textLength="12" lengthAdjust="spacingAndGlyphs">&#931;</text><path d="M3 12h4.500M5.250 9.700v4.600" stroke="#8a1010" stroke-width="1.300"/></svg>
<svg class="abs" style="left:600px;top:87px" width="8" height="5" viewBox="0 0 8 5"><path d="M0 0h8l-4 4.500z" fill="#1a1a1a"/></svg>
<svg class="abs" style="left:614.5px;top:77.5px" width="23" height="23" viewBox="0 0 23 23"><path d="M7 .8h9l6.200 6.200v9l-6.200 6.200h-9l-6.200-6.200v-9z" fill="url(#oct)" stroke="#2c2418" stroke-width=".9"/><text x="11.500" y="16" text-anchor="middle" font-family="Liberation Serif" font-style="italic" font-size="15" fill="#111">fx</text></svg>
<svg class="abs" style="left:653px;top:77px" width="25" height="25" viewBox="0 0 25 25"><path d="M16 16l5 5" stroke="#5272c0" stroke-width="5.200" stroke-linecap="round"/><path d="M16 16l5 5" stroke="#9ab6ee" stroke-width="3.200" stroke-linecap="round"/><circle cx="9.500" cy="9.500" r="8.300" fill="url(#lens)" stroke="#9c9ca4" stroke-width="1"/><circle cx="9.500" cy="9.500" r="7" fill="none" stroke="#eeeef2" stroke-width="1.800"/><circle cx="9.500" cy="9.500" r="5.900" fill="none" stroke="#b0b4bc" stroke-width=".6"/><path d="M5.500 9.500h8" stroke="#4f74c8" stroke-width="2"/><path d="M9.500 5.500v8" stroke="#4f74c8" stroke-width="2"/></svg>
<svg class="abs" style="left:684px;top:77px" width="25" height="25" viewBox="0 0 25 25"><path d="M16 16l5 5" stroke="#5272c0" stroke-width="5.200" stroke-linecap="round"/><path d="M16 16l5 5" stroke="#9ab6ee" stroke-width="3.200" stroke-linecap="round"/><circle cx="9.500" cy="9.500" r="8.300" fill="url(#lens)" stroke="#9c9ca4" stroke-width="1"/><circle cx="9.500" cy="9.500" r="7" fill="none" stroke="#eeeef2" stroke-width="1.800"/><circle cx="9.500" cy="9.500" r="5.900" fill="none" stroke="#b0b4bc" stroke-width=".6"/><path d="M5.500 9.500h8" stroke="#4f74c8" stroke-width="2"/></svg>
<svg class="abs" style="left:723px;top:77px" width="24" height="23" viewBox="0 0 24 23"><rect x="1" y="1" width="6.500" height="21" fill="#a8201c"/><rect x="2.500" y="1" width="1.500" height="21" fill="#d86a60" opacity=".6"/><rect x="7.500" y="1" width="2" height="21" fill="#3a8a3a"/><rect x="7.500" y="11" width="5" height="11" fill="#3a7ad0"/><rect x="12" y="5" width="6" height="17" fill="#1f6a30"/><rect x="13.500" y="6" width="1.200" height="16" fill="#6ab07a" opacity=".6"/><rect x="12" y="4.500" width="6" height="1" fill="#6a2a7a"/><rect x="18" y="14" width="5" height="8" fill="#e0902c"/></svg>
<svg class="abs" style="left:755px;top:77px" width="22" height="24" viewBox="0 0 22 24"><path d="M11 1c3 2 6 3 9.500 3 0 9-2 15-9.500 19-7.500-4-9.500-10-9.500-19 3.500 0 6.500-1 9.500-3z" fill="#9ed83a" stroke="#5fa018"/><path d="M11 4c2.300 1.500 4.500 2.200 7 2.400-.2 6.500-1.800 11-7 14-5.200-3-6.800-7.500-7-14 2.500-.2 4.700-.9 7-2.400z" fill="#f2f4f0"/><path d="M6.500 11.500l3.500 3.500 6-6.500" fill="none" stroke="#1a1a1a" stroke-width="2.600"/></svg>
<svg class="abs" style="left:793px;top:77px" width="25" height="24" viewBox="0 0 25 24"><path d="M1.500 22.500h22v-2.500" fill="none" stroke="#1a1a1a" stroke-width="1.200"/><path d="M4 20l2-6 12-12.500 4 4-12.500 12z" fill="#f6c43a" stroke="#c08a1a" stroke-width=".7"/><path d="M18 1.500l2-1.200 3.700 3.700-1.700 1.500z" fill="#e45a4a" stroke="#b03020" stroke-width=".5"/><path d="M4 20l2-6 3.500 3.500z" fill="#f4dcb0"/><path d="M4 20l.8-2.200 1.400 1.400z" fill="#333"/></svg>
<svg class="abs" style="left:827px;top:80px" width="18" height="18" viewBox="0 0 18 18"><path d="M1 16.500l16-15.500" stroke="#111" stroke-width="2"/></svg>
<svg class="abs" style="left:858px;top:80px" width="19" height="18" viewBox="0 0 19 18"><rect x=".75" y=".75" width="17" height="16.500" fill="url(#sq)" stroke="#1a1a1a" stroke-width="1.200"/></svg>
<svg class="abs" style="left:885px;top:80px" width="26" height="17" viewBox="0 0 26 17"><ellipse cx="13" cy="8.500" rx="11.800" ry="7.300" fill="url(#oct)" stroke="#1a1a1a" stroke-width="1.200"/></svg>
<svg class="abs" style="left:920px;top:76px" width="20" height="26" viewBox="0 0 20 26"><path d="M11.400 1.400L16 1.400L16.900 3.200L13.700 8.100L17.600 13.100L11.400 18.700L10.400 23.500L6.700 23.500L2.400 20.500L2.400 17.300L4.700 16.400L4.900 12.200L1.400 10.400L1.400 5.800L6.700 4.800Z" fill="url(#fold)" stroke="#0a0a0a" stroke-width="1.300" stroke-linejoin="round"/></svg>
<svg class="abs" style="left:958px;top:77px" width="21" height="24" viewBox="0 0 21 24"><path d="M1.5 1.5h12l5 5v16h-17z" fill="url(#pg)" stroke="#9a9aa2" stroke-width="1"/><path d="M13.5 1.5v5h5" fill="#f4f4f8" stroke="#9a9aa2" stroke-width="1"/><path d="M9.500 4.500l6 6.500h-3.500v6.500h-5v-6.500h-3.500z" fill="#4fa2ea" stroke="#1f6fc8" stroke-width=".8"/></svg>
<svg class="abs" style="left:989px;top:77px" width="22" height="24" viewBox="0 0 22 24"><path d="M1.5 1.5h12l5 5v16h-17z" fill="url(#pg)" stroke="#9a9aa2" stroke-width="1"/><path d="M13.5 1.5v5h5" fill="#f4f4f8" stroke="#9a9aa2" stroke-width="1"/><path d="M17.500 13.500l-6.500 6v-3.500h-6.500v-5h6.500v-3.500z" fill="#4fa2ea" stroke="#1f6fc8" stroke-width=".8"/></svg>
<div class="abs" style="left:0;top:105px;width:1031px;height:28px;background:#f0f0f0"></div>
<div class="abs" style="left:3px;top:107.500px;width:81px;height:21px;background:#f0f0f0;border:1px solid #d0d0d0;border-top-color:#bdbdbd;border-left-color:#bdbdbd"></div>
<div class="abs" style="left:3px;top:108px;width:81px;height:22px;line-height:22px;text-align:center;font-size:11.500px;letter-spacing:-.3px">A8</div>
<div class="abs" style="left:89px;top:107px;width:938.500px;height:21.500px;background:#fff;border:1px solid #e2e2e2;border-radius:3px"></div>
<div class="abs" style="left:93px;top:108px;height:22px;line-height:22px;font-size:11px;letter-spacing:-.15px">6.02844332439287</div>
<div class="abs" style="left:0;top:132px;width:1015px;height:487px;background:#fff"></div>
<div class="abs" style="left:44px;top:150px;width:971px;height:469px;background-image:linear-gradient(90deg,transparent 63px,#c8c8c8 63px),linear-gradient(transparent 16px,#c8c8c8 16px);background-size:64px 17px,64px 17px"></div>
<div class="hdr ch" style="left:0;width:44px"></div>
<div class="hdr ch" style="left:44px;width:64px">A</div>
<div class="hdr ch" style="left:108px;width:64px">B</div>
<div class="hdr ch" style="left:172px;width:64px">C</div>
<div class="hdr ch" style="left:236px;width:64px">D</div>
<div class="hdr ch" style="left:300px;width:64px">E</div>
<div class="hdr ch" style="left:364px;width:64px">F</div>
<div class="hdr ch" style="left:428px;width:64px">G</div>
<div class="hdr ch" style="left:492px;width:64px">H</div>
<div class="hdr ch" style="left:556px;width:64px">I</div>
<div class="hdr ch" style="left:620px;width:64px">J</div>
<div class="hdr ch" style="left:684px;width:64px">K</div>
<div class="hdr ch" style="left:748px;width:64px">L</div>
<div class="hdr ch" style="left:812px;width:64px">M</div>
<div class="hdr ch" style="left:876px;width:64px">N</div>
<div class="hdr ch" style="left:940px;width:64px">O</div>
<div class="hdr ch" style="left:1004px;width:11px;border-right:none"></div>
<div class="hdr rh" style="top:150px">8</div>
<div class="hdr rh" style="top:167px">9</div>
<div class="hdr rh" style="top:184px">10</div>
<div class="hdr rh" style="top:201px">11</div>
<div class="hdr rh" style="top:218px">12</div>
<div class="hdr rh" style="top:235px">13</div>
<div class="hdr rh" style="top:252px">14</div>
<div class="hdr rh" style="top:269px">15</div>
<div class="hdr rh" style="top:286px">16</div>
<div class="hdr rh" style="top:303px">17</div>
<div class="hdr rh" style="top:320px">18</div>
<div class="hdr rh" style="top:337px">19</div>
<div class="hdr rh" style="top:354px">20</div>
<div class="hdr rh" style="top:371px">21</div>
<div class="hdr rh" style="top:388px">22</div>
<div class="hdr rh" style="top:405px">23</div>
<div class="hdr rh" style="top:422px">24</div>
<div class="hdr rh" style="top:439px">25</div>
<div class="hdr rh" style="top:456px">26</div>
<div class="hdr rh" style="top:473px">27</div>
<div class="hdr rh" style="top:490px">28</div>
<div class="hdr rh" style="top:507px">29</div>
<div class="hdr rh" style="top:524px">30</div>
<div class="hdr rh" style="top:541px">31</div>
<div class="hdr rh" style="top:558px">32</div>
<div class="hdr rh" style="top:575px">33</div>
<div class="hdr rh" style="top:592px">34</div>
<div class="hdr rh" style="top:609px">35</div>
<div class="abs" style="left:43.500px;top:150px;width:128.500px;height:102px;background:#000"></div>
<div class="abs" style="left:46px;top:152px;width:61px;height:15px;background:#fff"></div>
<div class="abs" style="left:46px;top:166px;width:126px;height:1px;background:#404040"></div>
<div class="abs" style="left:46px;top:183px;width:126px;height:1px;background:#404040"></div>
<div class="abs" style="left:46px;top:200px;width:126px;height:1px;background:#404040"></div>
<div class="abs" style="left:46px;top:217px;width:126px;height:1px;background:#404040"></div>
<div class="abs" style="left:46px;top:234px;width:126px;height:1px;background:#404040"></div>
<div class="abs" style="left:107px;top:150px;width:1px;height:102px;background:#404040"></div>
<div class="abs" style="left:44px;top:150px;width:127px;height:51px;border:1.500px solid #00ffff;border-right:none"></div>
<div class="abs" style="left:44px;top:252px;width:128px;height:1.500px;background:#000"></div>
<div class="abs" style="left:45.500px;top:201.500px;width:1px;height:48px;background:#f4f4f4"></div>
<div class="abs" style="left:45.500px;top:248.800px;width:126px;height:1px;background:#f4f4f4"></div>
<div class="abs" style="left:170px;top:167px;width:2px;height:60px;background:#00e000"></div>
<div class="abs" style="left:170px;top:150px;width:2px;height:17px;background:#222"></div>
<div class="abs" style="left:172px;top:150px;width:129px;height:1.500px;background:#ff0000"></div>
<div class="abs" style="left:298px;top:150px;width:1px;height:52px;background:#ff0000"></div>
<div class="abs" style="left:300px;top:150px;width:1px;height:52px;background:#ff0000"></div>
<div class="abs" style="left:171px;top:165px;width:259px;height:54px;border:1px solid #ff00ff"></div><div class="abs" style="left:172px;top:166px;width:257px;height:52px;border:1px solid #fff"></div><div class="abs" style="left:173px;top:167px;width:255px;height:50px;border:1px solid #ff00ff"></div>
<div class="abs" style="left:171px;top:166px;width:3px;height:60px;background:#fff"></div>
<div class="abs" style="left:170px;top:167px;width:2px;height:60px;background:#00e000"></div>
<div class="abs" style="left:235px;top:182px;width:322px;height:54px;border:1px solid #3a78f0"></div><div class="abs" style="left:236px;top:183px;width:320px;height:52px;border:1px solid #fff"></div><div class="abs" style="left:237px;top:184px;width:318px;height:50px;border:1px solid #3a78f0"></div>
<div class="cell" style="left:44px;width:60px;top:150px;color:#ff0000">6</div>
<div class="cell" style="left:44px;width:60px;top:167px;color:#00ffff">16</div>
<div class="cell" style="left:44px;width:60px;top:184px;color:#00ffff">21</div>
<div class="cell" style="left:44px;width:60px;top:201px;color:#00ffff">22</div>
<div class="cell" style="left:44px;width:60px;top:218px;color:#00ffff">30</div>
<div class="cell" style="left:44px;width:60px;top:235px;color:#00ffff">35</div>
<div class="cell" style="left:108px;width:60px;top:150px;color:#e09018">5</div>
<div class="cell" style="left:108px;width:60px;top:167px;color:#e09018">7</div>
<div class="cell" style="left:108px;width:60px;top:184px;color:#e09018">20</div>
<div class="cell" style="left:172px;width:60px;top:150px;color:#ff0000">2</div>
<div class="cell" style="left:172px;width:60px;top:167px;color:#ff0000">18</div>
<div class="cell" style="left:172px;width:60px;top:184px;color:#ff0000">28</div>
<div class="cell" style="left:236px;width:60px;top:150px;color:#2f6cf0">5</div>
<div class="cell" style="left:236px;width:60px;top:167px;color:#2f6cf0">21</div>
<div class="cell" style="left:236px;width:60px;top:184px;color:#2f6cf0">29</div>
<div class="cell" style="left:300px;width:60px;top:150px;color:#ff0000">5</div>
<div class="cell" style="left:300px;width:60px;top:167px;color:#ff0000">10</div>
<div class="cell" style="left:300px;width:60px;top:184px;color:#ff0000">15</div>
<div class="cell" style="left:300px;width:60px;top:201px;color:#ff0000">25</div>
<div class="cell" style="left:300px;width:60px;top:218px;color:#ff0000">36</div>
<div class="cell" style="left:300px;width:60px;top:235px;color:#ff0000">48</div>
<div class="cell" style="left:364px;width:60px;top:150px;color:#2f6cf0">3</div>
<div class="cell" style="left:364px;width:60px;top:167px;color:#2f6cf0">31</div>
<div class="cell" style="left:364px;width:60px;top:184px;color:#2f6cf0">39</div>
<div class="cell" style="left:364px;width:60px;top:201px;color:#2f6cf0">42</div>
<div class="cell" style="left:364px;width:60px;top:218px;color:#2f6cf0">42</div>
<div class="cell" style="left:364px;width:60px;top:235px;color:#2f6cf0">48</div>
<div class="cell" style="left:428px;width:60px;top:150px;color:#ff0000">14</div>
<div class="cell" style="left:428px;width:60px;top:167px;color:#ff0000">17</div>
<div class="cell" style="left:428px;width:60px;top:184px;color:#ff0000">26</div>
<div class="cell" style="left:428px;width:60px;top:201px;color:#ff0000">36</div>
<div class="cell" style="left:428px;width:60px;top:218px;color:#ff0000">40</div>
<div class="cell" style="left:428px;width:60px;top:235px;color:#ff0000">44</div>
<div class="cell" style="left:492px;width:60px;top:150px;color:#2f6cf0">5</div>
<div class="cell" style="left:492px;width:60px;top:167px;color:#2f6cf0">20</div>
<div class="cell" style="left:492px;width:60px;top:184px;color:#2f6cf0">28</div>
<div class="cell" style="left:492px;width:60px;top:201px;color:#2f6cf0">35</div>
<div class="cell" style="left:492px;width:60px;top:218px;color:#2f6cf0">42</div>
<div class="cell" style="left:492px;width:60px;top:235px;color:#2f6cf0">45</div>
<div class="abs" style="left:1015px;top:132px;width:16px;height:487px;background:#f0f0f0"></div>
<div class="abs" style="left:1015px;top:132px;width:1px;height:487px;background:#fafafa"></div>
<svg class="abs" style="left:1020.500px;top:138.500px" width="8" height="4.500" viewBox="0 0 8 4.500"><path d="M0 4.500h8l-4-4.500z" fill="#555"/></svg>
<svg class="abs" style="left:1020.500px;top:610px" width="8" height="4.500" viewBox="0 0 8 4.500"><path d="M0 0h8l-4 4.500z" fill="#555"/></svg>
<div class="abs" style="left:1016px;top:182px;width:14px;height:14px;background:linear-gradient(90deg,#f6f6f6,#dcdcdc);border:1px solid #9a9a9a;border-radius:2px"></div>
<svg class="abs" style="left:323px;top:248px" width="692" height="371" viewBox="331 277 692 371"><defs><radialGradient id="cbg" gradientUnits="userSpaceOnUse" cx="850" cy="655" r="650"><stop offset="0" stop-color="#00a2f2"/><stop offset=".27" stop-color="#00a0f0"/><stop offset=".42" stop-color="#0097e3"/><stop offset=".6" stop-color="#008acf"/><stop offset=".8" stop-color="#0084c5"/><stop offset="1" stop-color="#0080c0"/></radialGradient></defs><rect x="331" y="277" width="692" height="371" fill="url(#cbg)"/><path d="M723.7 388.3L883.4 300.4" stroke="#001018" stroke-width="1.1" fill="none"/><path d="M726.8 427.0L884.6 335.8" stroke="#001018" stroke-width="1.1" fill="none"/><path d="M730.1 464.7L885.4 369.5" stroke="#001018" stroke-width="1.1" fill="none"/><path d="M732.4 502.1L886.3 403.3" stroke="#001018" stroke-width="1.1" fill="none"/><path d="M735.8 537.9L887.2 436.8" stroke="#001018" stroke-width="1.1" fill="none"/><path d="M739.1 573.2L888.1 469.5" stroke="#001018" stroke-width="1.1" fill="none"/><path d="M741.9 607.0L889.0 501.5" stroke="#001018" stroke-width="1.1" fill="none"/><path d="M745.0 639.5L889.9 533.0" stroke="#001018" stroke-width="1.1" fill="none"/><path d="M883.4 300.4L1023.0 329.4" stroke="#001018" stroke-width="1.1" fill="none"/><path d="M884.6 335.8L1023.0 365.6" stroke="#001018" stroke-width="1.1" fill="none"/><path d="M885.4 369.5L1023.0 400.6" stroke="#001018" stroke-width="1.1" fill="none"/><path d="M886.3 403.3L1023.0 436.2" stroke="#001018" stroke-width="1.1" fill="none"/><path d="M887.2 436.8L1023.0 470.3" stroke="#001018" stroke-width="1.1" fill="none"/><path d="M888.1 469.5L1023.0 503.3" stroke="#001018" stroke-width="1.1" fill="none"/><path d="M889.0 501.5L1023.0 536.2" stroke="#001018" stroke-width="1.1" fill="none"/><path d="M889.9 533.0L1023.0 567.5" stroke="#001018" stroke-width="1.1" fill="none"/><path d="M890.8 564.0L1023.0 599.0" stroke="#001018" stroke-width="1.1" fill="none"/><path d="M723.7 388.3L746.0 650.0" stroke="#001018" stroke-width="1.3" fill="none"/><path d="M883.4 300.4L892.0 600.0" stroke="#001018" stroke-width="1.3" fill="none"/><path d="M720.7 389.5L723.7 388.3" stroke="#001018" stroke-width="1.1" fill="none"/><text transform="translate(718.2 396.3) rotate(-26) scale(.8 1.120) skewX(-10)" text-anchor="end" font-family="Liberation Sans" font-size="10" fill="#000">50</text><path d="M723.8 428.2L726.8 427.0" stroke="#001018" stroke-width="1.1" fill="none"/><text transform="translate(721.3 435.0) rotate(-26) scale(.8 1.120) skewX(-10)" text-anchor="end" font-family="Liberation Sans" font-size="10" fill="#000">45</text><path d="M727.1 465.9L730.1 464.7" stroke="#001018" stroke-width="1.1" fill="none"/><text transform="translate(724.6 472.7) rotate(-26) scale(.8 1.120) skewX(-10)" text-anchor="end" font-family="Liberation Sans" font-size="10" fill="#000">40</text><path d="M729.4 503.3L732.4 502.1" stroke="#001018" stroke-width="1.1" fill="none"/><text transform="translate(726.9 510.1) rotate(-26) scale(.8 1.120) skewX(-10)" text-anchor="end" font-family="Liberation Sans" font-size="10" fill="#000">35</text><path d="M732.8 539.1L735.8 537.9" stroke="#001018" stroke-width="1.1" fill="none"/><text transform="translate(730.3 545.9) rotate(-26) scale(.8 1.120) skewX(-10)" text-anchor="end" font-family="Liberation Sans" font-size="10" fill="#000">30</text><path d="M736.1 574.4L739.1 573.2" stroke="#001018" stroke-width="1.1" fill="none"/><text transform="translate(733.6 581.2) rotate(-26) scale(.8 1.120) skewX(-10)" text-anchor="end" font-family="Liberation Sans" font-size="10" fill="#000">25</text><path d="M738.9 608.2L741.9 607.0" stroke="#001018" stroke-width="1.1" fill="none"/><text transform="translate(736.4 615.0) rotate(-26) scale(.8 1.120) skewX(-10)" text-anchor="end" font-family="Liberation Sans" font-size="10" fill="#000">20</text><path d="M742.0 640.7L745.0 639.5" stroke="#001018" stroke-width="1.1" fill="none"/><text transform="translate(739.5 647.5) rotate(-26) scale(.8 1.120) skewX(-10)" text-anchor="end" font-family="Liberation Sans" font-size="10" fill="#000">15</text><text transform="translate(711.300 498.500) rotate(-95.300)" text-anchor="end" font-family="Liberation Sans" font-weight="bold" font-size="16" fill="#ff1010" letter-spacing=".9">Percentage Deviation</text><polygon points="861.2,373.0 868.6,369.5 882.4,420.0 883.0,419.0 878.5,425.5 875.0,420.0 863.0,377.3 861.0,378.6" fill="#00a8a8" stroke="#000" stroke-width="0.35" stroke-opacity=".55"/><polygon points="861.0,378.6 863.0,377.3 875.0,420.0 878.5,426.0 874.2,452.6 855.6,442.5 857.8,420.0" fill="#00e4e4" stroke="#000" stroke-width="0.35" stroke-opacity=".55"/><polygon points="889.0,440.0 891.5,452.0 893.2,470.0 896.0,500.0 892.0,500.0" fill="#00a8a8" stroke="none" stroke-width="0.35" stroke-opacity=".55"/><polygon points="969.3,422.4 975.4,418.4 1003.0,417.2 996.6,421.5" fill="#5c0000" stroke="#000" stroke-width="0.35" stroke-opacity=".55"/><polygon points="996.6,421.5 1003.0,417.2 1019.4,611.0 1005.1,648.0 1004.0,560.0" fill="#5c0000" stroke="#000" stroke-width="0.35" stroke-opacity=".55"/><polygon points="969.3,422.4 996.6,421.5 1002.2,480.0 1008.2,560.0 1012.5,620.0 1005.1,648.0 960.0,648.0 952.0,526.7 957.2,500.0" fill="#7c0000" stroke="#000" stroke-width="0.35" stroke-opacity=".55"/><polygon points="983.1,493.0 987.5,490.4 996.1,560.0 1005.1,648.0 998.7,648.0 989.2,560.0" fill="#303030" stroke="#000" stroke-width="0.35" stroke-opacity=".55"/><polygon points="983.1,493.0 989.2,560.0 998.7,648.0 973.9,648.0 965.3,573.3 973.0,530.0" fill="#404040" stroke="#000" stroke-width="0.35" stroke-opacity=".55"/><polygon points="912.2,448.0 919.1,444.6 921.7,455.0 933.0,500.0 948.6,544.0 946.0,563.0 929.5,480.0" fill="#006400" stroke="#000" stroke-width="0.35" stroke-opacity=".55"/><polygon points="912.2,448.0 929.5,480.0 946.0,563.0 939.0,600.0 927.0,480.0 917.0,458.0 910.0,470.0 909.0,500.0" fill="#006400" stroke="#000" stroke-width="0.35" stroke-opacity=".55"/><polygon points="934.1,547.3 937.6,545.6 945.4,565.5 941.9,585.4 940.5,604.0 937.6,580.2" fill="#404040" stroke="#000" stroke-width="0.35" stroke-opacity=".55"/><polygon points="937.1,579.3 939.0,580.0 941.2,604.0 940.0,604.0" fill="#00a8a8" stroke="none" stroke-width="0.35" stroke-opacity=".55"/><polygon points="950.9,531.5 957.6,524.1 965.3,573.3 973.9,648.0 966.1,648.0 953.0,545.0" fill="#a800a8" stroke="#000" stroke-width="0.35" stroke-opacity=".55"/><polygon points="950.6,533.0 953.0,545.0 966.1,648.0 933.8,648.0 940.2,604.4" fill="#f000f0" stroke="#000" stroke-width="0.35" stroke-opacity=".55"/><polygon points="917.0,460.0 923.5,455.0 925.2,470.0 927.0,480.0 934.7,560.0 943.9,648.0 936.5,648.0 928.7,560.0 920.0,480.0 918.0,465.0" fill="#0000a0" stroke="#000" stroke-width="0.35" stroke-opacity=".55"/><polygon points="916.6,465.3 918.0,465.0 920.0,480.0 928.7,560.0 936.5,648.0 922.6,648.0 911.4,560.0 909.7,542.0 914.8,480.0" fill="#0000e4" stroke="#000" stroke-width="0.35" stroke-opacity=".55"/><polygon points="1023.0,607.6 1023.0,648.0 1005.1,648.0" fill="#0000e4" stroke="#000" stroke-width="0.35" stroke-opacity=".55"/><path d="M1018.500 613L1012.300 629" stroke="#f0f000" stroke-width="1.500"/><polygon points="897.1,416.9 903.8,413.0 910.5,470.0 912.3,480.0 913.1,500.0 910.5,531.9 909.7,541.4 905.3,480.0 903.6,470.0 898.4,427.3 897.5,424.0" fill="#a800a8" stroke="#000" stroke-width="0.35" stroke-opacity=".55"/><polygon points="897.5,424.0 898.4,427.3 903.6,470.0 905.3,480.0 909.7,541.4 901.9,546.6 894.0,480.0 894.1,470.0" fill="#f000f0" stroke="#000" stroke-width="0.35" stroke-opacity=".55"/><polygon points="899.3,551.8 908.8,543.0 911.4,560.0 922.6,648.0 914.8,648.0 903.6,560.0" fill="#00b000" stroke="#000" stroke-width="0.35" stroke-opacity=".55"/><polygon points="899.3,551.8 903.6,560.0 914.8,648.0 908.8,648.0 899.3,560.0" fill="#00f000" stroke="#000" stroke-width="0.35" stroke-opacity=".55"/><polygon points="879.0,423.0 886.7,417.3 892.8,470.0 897.0,500.0 901.5,546.6 898.5,552.0 895.0,535.0 890.0,500.0 884.1,461.9 879.8,426.9" fill="#a8a000" stroke="#000" stroke-width="0.35" stroke-opacity=".55"/><polygon points="879.8,426.9 884.1,461.9 874.2,452.4" fill="#f0f000" stroke="#000" stroke-width="0.35" stroke-opacity=".55"/><polygon points="821.4,418.9 828.3,415.4 842.2,445.7 846.5,456.5 849.8,468.0 850.5,490.0 846.0,480.0" fill="#c800c8" stroke="#000" stroke-width="0.35" stroke-opacity=".55"/><polygon points="821.4,418.9 822.3,431.9 838.0,452.0 830.0,436.0" fill="#f000f0" stroke="#000" stroke-width="0.35" stroke-opacity=".55"/><polygon points="783.4,398.2 790.3,393.5 818.0,433.6 844.8,448.3 837.8,452.6 811.0,436.2" fill="#0000c0" stroke="#000" stroke-width="0.35" stroke-opacity=".55"/><polygon points="837.8,452.6 844.8,448.3 847.4,476.0 848.0,490.0 846.5,500.0" fill="#0000a0" stroke="#000" stroke-width="0.35" stroke-opacity=".55"/><polygon points="783.4,398.2 811.0,436.2 837.8,452.6 846.5,500.0 848.2,480.0 838.4,560.0 837.0,574.5 833.5,574.5 801.5,596.3 794.6,560.0 789.4,480.0" fill="#0000e4" stroke="#000" stroke-width="0.35" stroke-opacity=".55"/><polygon points="825.6,581.6 833.5,574.5 837.5,575.0 833.0,601.0" fill="#00b000" stroke="#000" stroke-width="0.35" stroke-opacity=".55"/><polygon points="801.5,596.3 825.6,581.6 833.0,601.0 827.5,648.0 809.8,648.0" fill="#00e400" stroke="#000" stroke-width="0.35" stroke-opacity=".55"/><polygon points="752.6,509.7 758.3,504.2 784.2,500.4 776.5,505.9" fill="#a80000" stroke="#000" stroke-width="0.35" stroke-opacity=".55"/><polygon points="776.5,505.9 784.2,500.4 794.6,560.0 810.2,648.0 801.5,648.0 786.0,560.0" fill="#a80000" stroke="#000" stroke-width="0.35" stroke-opacity=".55"/><polygon points="752.6,509.7 776.5,505.9 786.0,560.0 801.5,648.0 762.3,648.0 756.6,560.0" fill="#e40000" stroke="#000" stroke-width="0.35" stroke-opacity=".55"/><polygon points="852.6,444.8 859.5,440.9 888.4,467.3 882.0,471.6" fill="#c40000" stroke="#000" stroke-width="0.35" stroke-opacity=".55"/><polygon points="882.0,471.6 888.4,467.3 889.8,480.0 899.3,560.0 908.8,648.0 901.0,648.0 891.5,560.0" fill="#a80000" stroke="#000" stroke-width="0.35" stroke-opacity=".55"/><polygon points="852.6,444.8 882.0,471.6 891.5,560.0 901.0,648.0 827.5,648.0 838.4,560.0 848.2,480.0" fill="#e40000" stroke="#000" stroke-width="0.35" stroke-opacity=".55"/></svg>
<div class="abs" style="left:323px;top:247px;width:692px;height:2px;background:#101820"></div>
<div class="abs" style="left:323px;top:247px;width:2px;height:372px;background:#101820"></div>
<div class="abs" style="left:372px;top:313.0px;width:19px;height:19px;background:#ff0000"></div>
<div class="abs" style="left:399.5px;top:312.5px;font:bold 16px 'Liberation Sans',sans-serif;line-height:20px;color:#ffffc4;white-space:nowrap;letter-spacing:-.37px">Series1</div>
<div class="abs" style="left:372px;top:355.4px;width:19px;height:19px;background:#00ff00"></div>
<div class="abs" style="left:399.5px;top:354.9px;font:bold 16px 'Liberation Sans',sans-serif;line-height:20px;color:#ffffc4;white-space:nowrap;letter-spacing:-.37px">Series2</div>
<div class="abs" style="left:372px;top:397.8px;width:19px;height:19px;background:#0000ff"></div>
<div class="abs" style="left:399.5px;top:397.3px;font:bold 16px 'Liberation Sans',sans-serif;line-height:20px;color:#ffffc4;white-space:nowrap;letter-spacing:-.37px">Series3</div>
<div class="abs" style="left:372px;top:440.2px;width:19px;height:19px;background:#ffff00"></div>
<div class="abs" style="left:399.5px;top:439.7px;font:bold 16px 'Liberation Sans',sans-serif;line-height:20px;color:#ffffc4;white-space:nowrap;letter-spacing:-.37px">Series4</div>
<div class="abs" style="left:372px;top:482.6px;width:19px;height:19px;background:#ff00ff"></div>
<div class="abs" style="left:399.5px;top:482.1px;font:bold 16px 'Liberation Sans',sans-serif;line-height:20px;color:#ffffc4;white-space:nowrap;letter-spacing:-.37px">Series5</div>
<div class="abs" style="left:372px;top:525.0px;width:19px;height:19px;background:#00ffff"></div>
<div class="abs" style="left:399.5px;top:524.5px;font:bold 16px 'Liberation Sans',sans-serif;line-height:20px;color:#ffffc4;white-space:nowrap;letter-spacing:-.37px">Series6</div>
<div class="abs" style="left:372px;top:567.4px;width:19px;height:19px;background:#404040"></div>
<div class="abs" style="left:399.5px;top:566.9px;font:bold 16px 'Liberation Sans',sans-serif;line-height:20px;color:#ffffc4;white-space:nowrap;letter-spacing:-.37px">Series7</div>
<div class="abs" style="left:372px;top:609.8px;width:19px;height:19px;background:#800000"></div>
<div class="abs" style="left:399.5px;top:609.3px;font:bold 16px 'Liberation Sans',sans-serif;line-height:20px;color:#ffffc4;white-space:nowrap;letter-spacing:-.37px">Series8</div>
<div class="abs" style="left:130.5px;top:193.5px;width:178.0px;height:323.5px;background:#fafafb;border:1px solid #9a9a9a;box-shadow:2.500px 2.500px 3px rgba(0,0,0,.45)"></div>
<div class="abs" style="left:131.5px;top:194.5px;width:27px;height:321.5px;background:linear-gradient(90deg,#d3e2f3 0,#b4cbe8 40%,#86abd8 80%,#7fa6d6 100%)"></div>
<div class="abs" style="left:133.5px;top:252.5px;width:172px;height:27px;border:1px solid #dcc9a0;border-radius:3px;background:linear-gradient(#fdf5e2 0,#fcecc4 45%,#fbdc98 75%,#f9c966 100%)"></div>
<div class="abs" style="left:163.5px;top:201px;height:18px;line-height:18px;font-size:12px;color:#17176e;white-space:nowrap;letter-spacing:0.004px">Cu<u>t</u></div>
<div class="abs" style="left:269px;top:201px;height:18px;line-height:18px;font-size:12px;color:#17176e;white-space:nowrap;letter-spacing:-0.115px">Ctrl+X</div>
<div class="abs" style="left:163.5px;top:229px;height:18px;line-height:18px;font-size:12px;color:#17176e;white-space:nowrap;letter-spacing:-0.133px"><u>C</u>opy</div>
<div class="abs" style="left:269px;top:229px;height:18px;line-height:18px;font-size:12px;color:#17176e;white-space:nowrap;letter-spacing:-0.224px">Ctrl+C</div>
<div class="abs" style="left:163.5px;top:257px;height:18px;line-height:18px;font-size:12px;color:#17176e;white-space:nowrap;letter-spacing:-0.258px">C<u>o</u>py as an Image</div>
<div class="abs" style="left:163.5px;top:285px;height:18px;line-height:18px;font-size:12px;color:#17176e;white-space:nowrap;letter-spacing:-0.641px"><u>P</u>aste</div>
<div class="abs" style="left:269px;top:285px;height:18px;line-height:18px;font-size:12px;color:#17176e;white-space:nowrap;letter-spacing:-0.115px">Ctrl+V</div>
<div class="abs" style="left:163.5px;top:313px;height:18px;line-height:18px;font-size:12px;color:#17176e;white-space:nowrap;letter-spacing:-0.488px">P<u>a</u>ste Values</div>
<div class="abs" style="left:163.5px;top:343.5px;height:18px;line-height:18px;font-size:12px;color:#17176e;white-space:nowrap;letter-spacing:-0.062px"><u>G</u>o Home - Cell A1</div>
<div class="abs" style="left:163.5px;top:375px;height:18px;line-height:18px;font-size:12px;color:#17176e;white-space:nowrap;letter-spacing:-0.349px">C<u>l</u>ear Selected Cell(s)...</div>
<div class="abs" style="left:163.5px;top:403px;height:18px;line-height:18px;font-size:12px;color:#17176e;white-space:nowrap;letter-spacing:-0.172px"><u>I</u>nsert</div>
<svg class="abs" style="left:294.5px;top:407px" width="5" height="8" viewBox="0 0 5 8"><path d="M0 0l5 4-5 4z" fill="#111"/></svg>
<div class="abs" style="left:163.5px;top:431px;height:18px;line-height:18px;font-size:12px;color:#17176e;white-space:nowrap;letter-spacing:-0.284px"><u>D</u>elete</div>
<svg class="abs" style="left:294.5px;top:435px" width="5" height="8" viewBox="0 0 5 8"><path d="M0 0l5 4-5 4z" fill="#111"/></svg>
<div class="abs" style="left:163.5px;top:461.5px;height:18px;line-height:18px;font-size:12px;color:#17176e;white-space:nowrap;letter-spacing:0.059px">P<u>r</u>int</div>
<svg class="abs" style="left:294.5px;top:465.5px" width="5" height="8" viewBox="0 0 5 8"><path d="M0 0l5 4-5 4z" fill="#111"/></svg>
<div class="abs" style="left:163.5px;top:492px;height:18px;line-height:18px;font-size:12px;color:#17176e;white-space:nowrap;letter-spacing:0.219px"><u>W</u>indow</div>
<svg class="abs" style="left:294.5px;top:496px" width="5" height="8" viewBox="0 0 5 8"><path d="M0 0l5 4-5 4z" fill="#111"/></svg>
<div class="abs" style="left:159.5px;top:336.5px;width:146.500px;height:1px;background:#c9c9c9"></div>
<div class="abs" style="left:159.5px;top:337.5px;width:146.500px;height:1px;background:#fff"></div>
<div class="abs" style="left:159.5px;top:367.5px;width:146.500px;height:1px;background:#c9c9c9"></div>
<div class="abs" style="left:159.5px;top:368.5px;width:146.500px;height:1px;background:#fff"></div>
<div class="abs" style="left:159.5px;top:454.5px;width:146.500px;height:1px;background:#c9c9c9"></div>
<div class="abs" style="left:159.5px;top:455.5px;width:146.500px;height:1px;background:#fff"></div>
<div class="abs" style="left:159.5px;top:485.3px;width:146.500px;height:1px;background:#c9c9c9"></div>
<div class="abs" style="left:159.5px;top:486.3px;width:146.500px;height:1px;background:#fff"></div>
<svg class="abs" style="left:136px;top:200px" width="19" height="18" viewBox="0 0 19 18"><path d="M10.200 1.500h4.500l2 2v8.500h-6.500z" fill="#fff" stroke="#000" stroke-width="1"/><path d="M11.500 4.500h2M11.500 7h1.500M14 7h1.500M11.500 9.500h1.500M14 9.500h1.500" stroke="#000" stroke-width="1"/><path d="M6 8l8 8M6.500 10.500l7-2.500" stroke="#555" stroke-width="1.300"/><ellipse cx="4.500" cy="5.500" rx="2.100" ry="2.700" transform="rotate(-20 4.500 5.500)" fill="none" stroke="#0000e0" stroke-width="1.700"/><ellipse cx="3.800" cy="11.500" rx="2.700" ry="2" transform="rotate(-20 3.800 11.500)" fill="none" stroke="#0000e0" stroke-width="1.700"/></svg>
<svg class="abs" style="left:136px;top:228px" width="19" height="19" viewBox="0 0 19 19"><path d="M1.500 1.500h5l3 3v8h-8z" fill="#fff" stroke="#000" stroke-width="1.100"/><path d="M3 4.500h2.500M3 7h1.500M5.500 7h2M3 9.500h1.500M5.500 9.500h2.500" stroke="#000" stroke-width="1.100"/><rect x="7.800" y="9.800" width="8.500" height="7.500" fill="#ffff00" stroke="#000" stroke-width="1"/><rect x="9.800" y="11.500" width="5" height="6" fill="#fff"/><rect x="10.500" y="9" width="3.500" height="1.800" fill="#222"/><path d="M8.500 2.200c3-.8 5.500.5 5.800 3.300h2.200l-3.200 4.300-3.200-4.300h2c-.2-1.400-1.500-2-3.600-1.800z" fill="#f00000"/></svg>
<svg class="abs" style="left:136px;top:256px" width="19" height="19" viewBox="0 0 19 19"><path d="M1.500 1.500h5l3 3v8h-8z" fill="#fff" stroke="#000" stroke-width="1.100"/><path d="M3 4.500h2.500M3 7h1.500M5.500 7h2M3 9.500h1.500M5.500 9.500h2.500" stroke="#000" stroke-width="1.100"/><rect x="7.800" y="9.800" width="8.500" height="7.500" fill="#ffff00" stroke="#000" stroke-width="1"/><rect x="9.800" y="11.500" width="5" height="6" fill="#fff"/><rect x="10.500" y="9" width="3.500" height="1.800" fill="#222"/><path d="M8.500 2.200c3-.8 5.500.5 5.800 3.300h2.200l-3.200 4.300-3.200-4.300h2c-.2-1.400-1.500-2-3.600-1.800z" fill="#f00000"/></svg>
<svg class="abs" style="left:136px;top:284px" width="19" height="19" viewBox="0 0 19 19"><rect x="1.300" y="1.500" width="9" height="12" rx="1" fill="#ffff00" stroke="#000" stroke-width="1.200"/><rect x="3.600" y="4" width="4.800" height="7.500" fill="#fff" stroke="#444" stroke-width=".5"/><path d="M3.500 2.800h5" stroke="#000" stroke-width="1.200"/><path d="M8 16.800v-2.800h2.200v-3.800h3l2.500 2.500v1.300h1.300v2.800z" fill="#fff" stroke="#000" stroke-width=".9"/><path d="M10 15.500h5" stroke="#000" stroke-width="1"/><path d="M12 1.500h3.500v3.500h2.200l-4 4.600-4-4.600h2.300z" fill="#f00000"/></svg>
<svg class="abs" style="left:136px;top:312px" width="19" height="18" viewBox="0 0 19 18"><rect x="1.300" y="1.300" width="15.500" height="15.500" fill="#ffff00" stroke="#000" stroke-width="1.100"/><path d="M1.300 1.300h15.500v3.500h-3l-1.500-1.500h-6.500l-1.500 1.500h-3z" fill="#800000"/><rect x="6.300" y="2" width="5.500" height="2.200" fill="#ffff00" stroke="#800000" stroke-width=".5"/><text x="9" y="15" text-anchor="middle" font-family="Liberation Serif" font-weight="bold" font-size="12" fill="#800000" letter-spacing="-.5">12</text></svg>
<svg class="abs" style="left:136px;top:374.5px" width="19" height="18" viewBox="0 0 19 18"><path d="M15 .8l2.700 2.400-7.500 8.800-3-2.600z" fill="#ffe800" stroke="#d00000" stroke-width="1.100"/><path d="M7.300 9.300l3 2.600-1.300 1.800-3.200-2.700z" fill="#e00000"/><path d="M12 3l3 2.700M10.500 4.800l3 2.700" stroke="#d00000" stroke-width=".9"/><path d="M1.500 13.500c1.500-2.500 3.500-1 4.500 0s2.500 3-.5 3-3.500 1-4.500-.5M3.500 8.500l1.300 2.200M1 11l1.800.8M7.500 14.500l1.500 2" fill="none" stroke="#000" stroke-width="1.500"/></svg>
<svg class="abs" style="left:136px;top:403px" width="19" height="18" viewBox="0 0 19 18"><rect x="1.500" y="1" width="14" height="11.500" rx="1.500" fill="#f6f8fc" stroke="#8fa4cc"/><rect x="2" y="1.500" width="13" height="3.500" fill="#5f88e0"/><path d="M12.500 7.500v8M8.500 11.500h8" stroke="#3fb82a" stroke-width="3"/></svg>
<svg class="abs" style="left:136px;top:430.5px" width="18" height="18" viewBox="0 0 18 18"><rect x="1" y="1" width="15.500" height="15.500" rx="4" fill="#c8343a" stroke="#9a2026"/><path d="M5 5l7.500 7.500M12.500 5l-7.500 7.500" stroke="#fff" stroke-width="2.600"/></svg>
<svg class="abs" style="left:136px;top:461.5px" width="18" height="17" viewBox="0 0 18 17"><path d="M4.500 8v-7h5.500l2.500 2.500v4.500z" fill="#fff" stroke="#000" stroke-width="1.100"/><path d="M6.500 3.500h2.500M6.500 5.800h4" stroke="#000" stroke-width="1"/><rect x="1.500" y="8.500" width="14.500" height="4.500" fill="#fff" stroke="#000" stroke-width="1.100"/><path d="M1 15.500h15.500" stroke="#000" stroke-width="1.600"/><path d="M3 10.700h10" stroke="#c00000" stroke-width="1.100" stroke-dasharray="1 1"/></svg>
<svg class="abs" style="left:136.5px;top:493px" width="18" height="18" viewBox="0 0 18 18"><rect x="1" y="1" width="15" height="15" rx="3.500" fill="#3f74dc" stroke="#2a52b0"/><rect x="3" y="6.500" width="8" height="6.500" fill="none" stroke="#e8f0ff" stroke-width="1.300"/><path d="M5 4.300h8.500v6.700" fill="none" stroke="#e8f0ff" stroke-width="1.300"/></svg>
<div class="abs" style="left:0;top:619px;width:1031px;height:38px;background:#f0f0f0"></div>
<div class="abs" style="left:17px;top:619px;width:17px;height:16px;background:#ececec"></div>
<div class="abs" style="left:34px;top:619px;width:572px;height:16px;background:#c0c0c0"></div>
<svg class="abs" style="left:30px;top:618px" width="580" height="18" viewBox="38 647 580 18"><path d="M110.600 648.500H614" stroke="#000" stroke-width="1.200"/><path d="M41.800 647.700L50 663.500H102.500L110.600 648z" fill="#fff"/><path d="M41.800 647.700L50 663.500H102.500L110.800 647.700" fill="none" stroke="#000" stroke-width="1.300"/></svg>
<div class="abs" style="left:47.3px;top:619px;height:16px;line-height:16px;font-size:13px;letter-spacing:-0.417px">Sheet1</div>
<svg class="abs" style="left:5px;top:624px" width="5" height="7" viewBox="0 0 5 7"><path d="M4.500 0v7l-4.500-3.500z" fill="#555"/></svg>
<svg class="abs" style="left:23.500px;top:624px" width="5" height="7" viewBox="0 0 5 7"><path d="M0 0v7l4.500-3.500z" fill="#555"/></svg>
<div class="abs" style="left:606px;top:619px;width:1.500px;height:16px;background:#333"></div>
<div class="abs" style="left:607.500px;top:619px;width:2px;height:16px;background:#fff"></div>
<svg class="abs" style="left:615px;top:624px" width="5" height="7" viewBox="0 0 5 7"><path d="M4.500 0v7l-4.500-3.500z" fill="#444"/></svg>
<svg class="abs" style="left:1005.500px;top:624px" width="5" height="7" viewBox="0 0 5 7"><path d="M0 0v7l4.500-3.500z" fill="#444"/></svg>
<div class="abs" style="left:627px;top:620px;width:15px;height:14px;background:linear-gradient(#f6f6f6,#dcdcdc);border:1px solid #9a9a9a;border-radius:2px"></div>
<div class="abs" style="left:1016.500px;top:619.500px;width:15px;height:15.500px;background:#c0c0c0"></div>
<div class="abs" style="left:22.4px;top:638px;height:18px;line-height:18px;font-size:12px;white-space:nowrap;letter-spacing:-0.536px">Row:</div>
<div class="abs" style="left:57.5px;top:638px;height:18px;line-height:18px;font-size:12px;white-space:nowrap;letter-spacing:-1.388px">8</div>
<div class="abs" style="left:73.1px;top:638px;height:18px;line-height:18px;font-size:12px;white-space:nowrap;letter-spacing:-0.436px">Col:</div>
<div class="abs" style="left:103.5px;top:638px;height:18px;line-height:18px;font-size:12px;white-space:nowrap;letter-spacing:-2.588px">1</div>
<div class="abs" style="left:214.0px;top:638px;height:18px;line-height:18px;font-size:12px;white-space:nowrap;letter-spacing:0.157px">NUM</div>
<div class="abs" style="left:259.7px;top:638px;height:18px;line-height:18px;font-size:12px;white-space:nowrap;letter-spacing:-0.972px">CAPS</div>
<div class="abs" style="left:307.3px;top:638px;height:18px;line-height:18px;font-size:12px;white-space:nowrap;letter-spacing:-1.172px">SCROLL</div>
<div class="abs" style="left:381.2px;top:638px;height:18px;line-height:18px;font-size:12px;white-space:nowrap;letter-spacing:-0.999px">INSERT</div>
<div class="abs" style="left:461.6px;top:638px;height:18px;line-height:18px;font-size:12px;white-space:nowrap;letter-spacing:-0.149px">5 Document(s) Open</div>
<div class="abs" style="left:605.9px;top:638px;height:18px;line-height:18px;font-size:12px;white-space:nowrap;letter-spacing:-0.54px">R: 26.987 mm</div>
<div class="abs" style="left:686.0px;top:638px;height:18px;line-height:18px;font-size:12px;white-space:nowrap;letter-spacing:-0.415px">C: 33.902 mm</div>
<div class="abs" style="left:806.2px;top:638px;height:18px;line-height:18px;font-size:12px;white-space:nowrap;letter-spacing:-0.625px">R: 1.063&quot;</div>
<div class="abs" style="left:861.0px;top:638px;height:18px;line-height:18px;font-size:12px;white-space:nowrap;letter-spacing:-0.625px">C: 1.335&quot;</div>
<div class="abs" style="left:944.4px;top:638px;height:18px;line-height:18px;font-size:12px;white-space:nowrap;letter-spacing:-0.696px">A8:B13</div>
<div class="abs" style="left:129.3px;top:637px;width:1px;height:19px;background:#d4d4d4"></div>
<div class="abs" style="left:204.6px;top:637px;width:1px;height:19px;background:#d4d4d4"></div>
<div class="abs" style="left:249.7px;top:637px;width:1px;height:19px;background:#d4d4d4"></div>
<div class="abs" style="left:294.5px;top:637px;width:1px;height:19px;background:#d4d4d4"></div>
<div class="abs" style="left:359.5px;top:637px;width:1px;height:19px;background:#d4d4d4"></div>
<div class="abs" style="left:439.6px;top:637px;width:1px;height:19px;background:#d4d4d4"></div>
<div class="abs" style="left:589.8px;top:637px;width:1px;height:19px;background:#d4d4d4"></div>
<div class="abs" style="left:769.4px;top:637px;width:1px;height:19px;background:#d4d4d4"></div>
<div class="abs" style="left:939.4px;top:637px;width:1px;height:19px;background:#d4d4d4"></div>
</div>
</div></body></html>
